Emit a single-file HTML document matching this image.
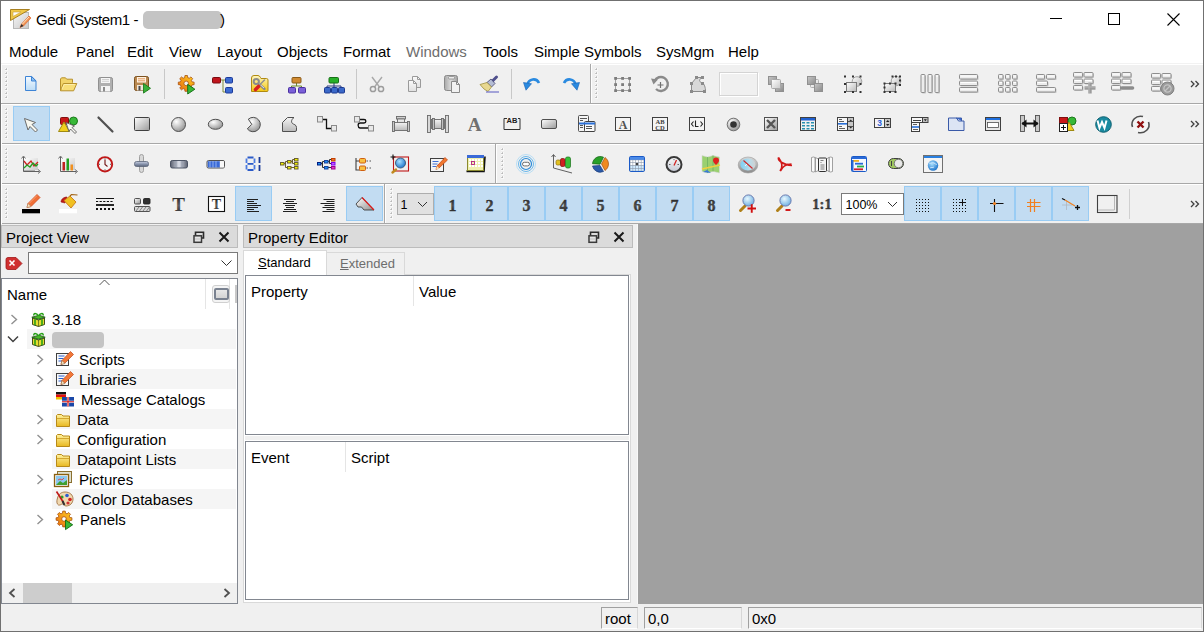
<!DOCTYPE html>
<html><head><meta charset="utf-8">
<style>
*{margin:0;padding:0;box-sizing:border-box}
html,body{width:1204px;height:632px;overflow:hidden;background:#f0f0f0}
body{position:relative;font-family:"Liberation Sans",sans-serif;color:#000}
.a{position:absolute;overflow:visible}
.t{position:absolute;font-size:15px;line-height:17px;white-space:nowrap}
.s{position:absolute;font-size:13px;line-height:15px;white-space:nowrap}
.sel{position:absolute;background:#c2dcf2;border:1px solid #99ccf4}
</style></head><body>

<div class="a" style="left:0;top:0;width:1204px;height:632px;border:1px solid #707070"></div>
<div class="a" style="left:1px;top:1px;width:1202px;height:62px;background:#fff"></div>
<div class="a" style="left:1px;top:63px;width:1202px;height:1px;background:#f2f2f2"></div>
<div class="a" style="left:1px;top:64px;width:1202px;height:1px;background:#fff"></div>
<div class="a" style="left:1px;top:64px;width:1px;height:160px;background:#fff"></div>
<svg class="a" style="left:9px;top:8px" width="22" height="22" viewBox="0 0 22 22">
<defs><linearGradient id="ap" x1="0" y1="0" x2="1" y2="1"><stop offset="0" stop-color="#f8f8f8"/><stop offset="1" stop-color="#c8c8c8"/></linearGradient></defs>
<rect x="4.5" y="4.5" width="15" height="16" fill="url(#ap)" stroke="#b8b8b8"/>
<path d="M1.5 1.5h19l-19 11z" fill="#f0c848" stroke="#a88020"/><path d="M4 4h8l-8 4.5z" fill="#fff" stroke="#c8a040" stroke-width="0.6"/>
<path d="M11 19.5l1.5-3.5 7.5-8 2 2-7.5 8z" fill="#f09050" stroke="#e06830" stroke-width="0.7"/><path d="M13 16.5l7-7.5" stroke="#fff0d0" stroke-width="0.9"/><path d="M11 19.5l1.5-3.5 2 2z" fill="#303030"/>
</svg>
<div class="t" style="left:36px;top:11px;letter-spacing:-0.42px">Gedi (System1 - </div>
<div class="a" style="left:143px;top:11px;width:79px;height:18px;border-radius:5px;background:#c4c4c4"></div>
<div class="t" style="left:220px;top:11px">)</div>
<div class="a" style="left:1050px;top:18px;width:12px;height:1px;background:#000"></div>
<div class="a" style="left:1108px;top:13px;width:12px;height:12px;border:1px solid #000"></div>
<svg class="a" style="left:1167px;top:13px" width="13" height="13" viewBox="0 0 13 13"><path d="M0.5 0.5L12.5 12.5M12.5 0.5L0.5 12.5" stroke="#000" stroke-width="1.1"/></svg>
<div class="t" style="left:9px;top:43px;">Module</div>
<div class="t" style="left:76px;top:43px;">Panel</div>
<div class="t" style="left:127px;top:43px;">Edit</div>
<div class="t" style="left:169px;top:43px;">View</div>
<div class="t" style="left:217px;top:43px;">Layout</div>
<div class="t" style="left:277px;top:43px;">Objects</div>
<div class="t" style="left:343px;top:43px;">Format</div>
<div class="t" style="left:406px;top:43px;color:#6d6d6d">Windows</div>
<div class="t" style="left:483px;top:43px;">Tools</div>
<div class="t" style="left:534px;top:43px;">Simple Symbols</div>
<div class="t" style="left:656px;top:43px;">SysMgm</div>
<div class="t" style="left:728px;top:43px;">Help</div>
<div class="a" style="left:1px;top:103px;width:1202px;height:1px;background:#a8a8a8"></div>
<div class="a" style="left:1px;top:104px;width:1202px;height:1px;background:#fff"></div>
<div class="a" style="left:1px;top:143px;width:1202px;height:1px;background:#a8a8a8"></div>
<div class="a" style="left:1px;top:144px;width:1202px;height:1px;background:#fff"></div>
<div class="a" style="left:1px;top:183px;width:1202px;height:1px;background:#a8a8a8"></div>
<div class="a" style="left:1px;top:184px;width:1202px;height:1px;background:#fff"></div>
<div class="a" style="left:1px;top:223px;width:1202px;height:1px;background:#a8a8a8"></div>
<div class="a" style="left:1px;top:104px;width:1px;height:120px;background:#fff"></div>
<svg class="a" style="left:5px;top:68px" width="3" height="3" viewBox="0 0 3 3"><path d="M0 0h3v3h-3z" fill="#fff" opacity="0.6"/><path d="M2 0v2h-2z" fill="#9c9c9c"/><rect x="1" y="1" width="1" height="1" fill="#b8b8b8"/></svg><svg class="a" style="left:5px;top:72px" width="3" height="3" viewBox="0 0 3 3"><path d="M0 0h3v3h-3z" fill="#fff" opacity="0.6"/><path d="M2 0v2h-2z" fill="#9c9c9c"/><rect x="1" y="1" width="1" height="1" fill="#b8b8b8"/></svg><svg class="a" style="left:5px;top:76px" width="3" height="3" viewBox="0 0 3 3"><path d="M0 0h3v3h-3z" fill="#fff" opacity="0.6"/><path d="M2 0v2h-2z" fill="#9c9c9c"/><rect x="1" y="1" width="1" height="1" fill="#b8b8b8"/></svg><svg class="a" style="left:5px;top:80px" width="3" height="3" viewBox="0 0 3 3"><path d="M0 0h3v3h-3z" fill="#fff" opacity="0.6"/><path d="M2 0v2h-2z" fill="#9c9c9c"/><rect x="1" y="1" width="1" height="1" fill="#b8b8b8"/></svg><svg class="a" style="left:5px;top:84px" width="3" height="3" viewBox="0 0 3 3"><path d="M0 0h3v3h-3z" fill="#fff" opacity="0.6"/><path d="M2 0v2h-2z" fill="#9c9c9c"/><rect x="1" y="1" width="1" height="1" fill="#b8b8b8"/></svg><svg class="a" style="left:5px;top:88px" width="3" height="3" viewBox="0 0 3 3"><path d="M0 0h3v3h-3z" fill="#fff" opacity="0.6"/><path d="M2 0v2h-2z" fill="#9c9c9c"/><rect x="1" y="1" width="1" height="1" fill="#b8b8b8"/></svg><svg class="a" style="left:5px;top:92px" width="3" height="3" viewBox="0 0 3 3"><path d="M0 0h3v3h-3z" fill="#fff" opacity="0.6"/><path d="M2 0v2h-2z" fill="#9c9c9c"/><rect x="1" y="1" width="1" height="1" fill="#b8b8b8"/></svg><svg class="a" style="left:5px;top:96px" width="3" height="3" viewBox="0 0 3 3"><path d="M0 0h3v3h-3z" fill="#fff" opacity="0.6"/><path d="M2 0v2h-2z" fill="#9c9c9c"/><rect x="1" y="1" width="1" height="1" fill="#b8b8b8"/></svg>
<div class="a" style="left:164px;top:69px;width:1px;height:30px;background:#c8c8c8"></div>
<div class="a" style="left:356px;top:69px;width:1px;height:30px;background:#c8c8c8"></div>
<div class="a" style="left:511px;top:69px;width:1px;height:30px;background:#c8c8c8"></div>
<div class="a" style="left:590px;top:64px;width:1px;height:39px;background:#a8a8a8"></div>
<div class="a" style="left:591px;top:64px;width:1px;height:39px;background:#fff"></div>
<svg class="a" style="left:595px;top:68px" width="3" height="3" viewBox="0 0 3 3"><path d="M0 0h3v3h-3z" fill="#fff" opacity="0.6"/><path d="M2 0v2h-2z" fill="#9c9c9c"/><rect x="1" y="1" width="1" height="1" fill="#b8b8b8"/></svg><svg class="a" style="left:595px;top:72px" width="3" height="3" viewBox="0 0 3 3"><path d="M0 0h3v3h-3z" fill="#fff" opacity="0.6"/><path d="M2 0v2h-2z" fill="#9c9c9c"/><rect x="1" y="1" width="1" height="1" fill="#b8b8b8"/></svg><svg class="a" style="left:595px;top:76px" width="3" height="3" viewBox="0 0 3 3"><path d="M0 0h3v3h-3z" fill="#fff" opacity="0.6"/><path d="M2 0v2h-2z" fill="#9c9c9c"/><rect x="1" y="1" width="1" height="1" fill="#b8b8b8"/></svg><svg class="a" style="left:595px;top:80px" width="3" height="3" viewBox="0 0 3 3"><path d="M0 0h3v3h-3z" fill="#fff" opacity="0.6"/><path d="M2 0v2h-2z" fill="#9c9c9c"/><rect x="1" y="1" width="1" height="1" fill="#b8b8b8"/></svg><svg class="a" style="left:595px;top:84px" width="3" height="3" viewBox="0 0 3 3"><path d="M0 0h3v3h-3z" fill="#fff" opacity="0.6"/><path d="M2 0v2h-2z" fill="#9c9c9c"/><rect x="1" y="1" width="1" height="1" fill="#b8b8b8"/></svg><svg class="a" style="left:595px;top:88px" width="3" height="3" viewBox="0 0 3 3"><path d="M0 0h3v3h-3z" fill="#fff" opacity="0.6"/><path d="M2 0v2h-2z" fill="#9c9c9c"/><rect x="1" y="1" width="1" height="1" fill="#b8b8b8"/></svg><svg class="a" style="left:595px;top:92px" width="3" height="3" viewBox="0 0 3 3"><path d="M0 0h3v3h-3z" fill="#fff" opacity="0.6"/><path d="M2 0v2h-2z" fill="#9c9c9c"/><rect x="1" y="1" width="1" height="1" fill="#b8b8b8"/></svg><svg class="a" style="left:595px;top:96px" width="3" height="3" viewBox="0 0 3 3"><path d="M0 0h3v3h-3z" fill="#fff" opacity="0.6"/><path d="M2 0v2h-2z" fill="#9c9c9c"/><rect x="1" y="1" width="1" height="1" fill="#b8b8b8"/></svg>
<div class="a" style="left:719px;top:72px;width:39px;height:24px;border:1px solid #d4d4d4;box-shadow:inset 1px 1px 0 #fff, 1px 1px 0 #fff"></div>
<svg class="a" style="left:1190px;top:80px" width="10" height="8" viewBox="0 0 10 8"><path d="M1 1l3 3-3 3M5.5 1l3 3-3 3" fill="none" stroke="#404040" stroke-width="1.3"/></svg>
<svg class="a" style="left:5px;top:108px" width="3" height="3" viewBox="0 0 3 3"><path d="M0 0h3v3h-3z" fill="#fff" opacity="0.6"/><path d="M2 0v2h-2z" fill="#9c9c9c"/><rect x="1" y="1" width="1" height="1" fill="#b8b8b8"/></svg><svg class="a" style="left:5px;top:112px" width="3" height="3" viewBox="0 0 3 3"><path d="M0 0h3v3h-3z" fill="#fff" opacity="0.6"/><path d="M2 0v2h-2z" fill="#9c9c9c"/><rect x="1" y="1" width="1" height="1" fill="#b8b8b8"/></svg><svg class="a" style="left:5px;top:116px" width="3" height="3" viewBox="0 0 3 3"><path d="M0 0h3v3h-3z" fill="#fff" opacity="0.6"/><path d="M2 0v2h-2z" fill="#9c9c9c"/><rect x="1" y="1" width="1" height="1" fill="#b8b8b8"/></svg><svg class="a" style="left:5px;top:120px" width="3" height="3" viewBox="0 0 3 3"><path d="M0 0h3v3h-3z" fill="#fff" opacity="0.6"/><path d="M2 0v2h-2z" fill="#9c9c9c"/><rect x="1" y="1" width="1" height="1" fill="#b8b8b8"/></svg><svg class="a" style="left:5px;top:124px" width="3" height="3" viewBox="0 0 3 3"><path d="M0 0h3v3h-3z" fill="#fff" opacity="0.6"/><path d="M2 0v2h-2z" fill="#9c9c9c"/><rect x="1" y="1" width="1" height="1" fill="#b8b8b8"/></svg><svg class="a" style="left:5px;top:128px" width="3" height="3" viewBox="0 0 3 3"><path d="M0 0h3v3h-3z" fill="#fff" opacity="0.6"/><path d="M2 0v2h-2z" fill="#9c9c9c"/><rect x="1" y="1" width="1" height="1" fill="#b8b8b8"/></svg><svg class="a" style="left:5px;top:132px" width="3" height="3" viewBox="0 0 3 3"><path d="M0 0h3v3h-3z" fill="#fff" opacity="0.6"/><path d="M2 0v2h-2z" fill="#9c9c9c"/><rect x="1" y="1" width="1" height="1" fill="#b8b8b8"/></svg><svg class="a" style="left:5px;top:136px" width="3" height="3" viewBox="0 0 3 3"><path d="M0 0h3v3h-3z" fill="#fff" opacity="0.6"/><path d="M2 0v2h-2z" fill="#9c9c9c"/><rect x="1" y="1" width="1" height="1" fill="#b8b8b8"/></svg>
<div class="sel" style="left:13px;top:106px;width:37px;height:35px"></div>
<svg class="a" style="left:1190px;top:120px" width="10" height="8" viewBox="0 0 10 8"><path d="M1 1l3 3-3 3M5.5 1l3 3-3 3" fill="none" stroke="#404040" stroke-width="1.3"/></svg>
<svg class="a" style="left:5px;top:148px" width="3" height="3" viewBox="0 0 3 3"><path d="M0 0h3v3h-3z" fill="#fff" opacity="0.6"/><path d="M2 0v2h-2z" fill="#9c9c9c"/><rect x="1" y="1" width="1" height="1" fill="#b8b8b8"/></svg><svg class="a" style="left:5px;top:152px" width="3" height="3" viewBox="0 0 3 3"><path d="M0 0h3v3h-3z" fill="#fff" opacity="0.6"/><path d="M2 0v2h-2z" fill="#9c9c9c"/><rect x="1" y="1" width="1" height="1" fill="#b8b8b8"/></svg><svg class="a" style="left:5px;top:156px" width="3" height="3" viewBox="0 0 3 3"><path d="M0 0h3v3h-3z" fill="#fff" opacity="0.6"/><path d="M2 0v2h-2z" fill="#9c9c9c"/><rect x="1" y="1" width="1" height="1" fill="#b8b8b8"/></svg><svg class="a" style="left:5px;top:160px" width="3" height="3" viewBox="0 0 3 3"><path d="M0 0h3v3h-3z" fill="#fff" opacity="0.6"/><path d="M2 0v2h-2z" fill="#9c9c9c"/><rect x="1" y="1" width="1" height="1" fill="#b8b8b8"/></svg><svg class="a" style="left:5px;top:164px" width="3" height="3" viewBox="0 0 3 3"><path d="M0 0h3v3h-3z" fill="#fff" opacity="0.6"/><path d="M2 0v2h-2z" fill="#9c9c9c"/><rect x="1" y="1" width="1" height="1" fill="#b8b8b8"/></svg><svg class="a" style="left:5px;top:168px" width="3" height="3" viewBox="0 0 3 3"><path d="M0 0h3v3h-3z" fill="#fff" opacity="0.6"/><path d="M2 0v2h-2z" fill="#9c9c9c"/><rect x="1" y="1" width="1" height="1" fill="#b8b8b8"/></svg><svg class="a" style="left:5px;top:172px" width="3" height="3" viewBox="0 0 3 3"><path d="M0 0h3v3h-3z" fill="#fff" opacity="0.6"/><path d="M2 0v2h-2z" fill="#9c9c9c"/><rect x="1" y="1" width="1" height="1" fill="#b8b8b8"/></svg><svg class="a" style="left:5px;top:176px" width="3" height="3" viewBox="0 0 3 3"><path d="M0 0h3v3h-3z" fill="#fff" opacity="0.6"/><path d="M2 0v2h-2z" fill="#9c9c9c"/><rect x="1" y="1" width="1" height="1" fill="#b8b8b8"/></svg>
<div class="a" style="left:495px;top:144px;width:1px;height:39px;background:#a8a8a8"></div>
<div class="a" style="left:496px;top:144px;width:1px;height:39px;background:#fff"></div>
<svg class="a" style="left:501px;top:148px" width="3" height="3" viewBox="0 0 3 3"><path d="M0 0h3v3h-3z" fill="#fff" opacity="0.6"/><path d="M2 0v2h-2z" fill="#9c9c9c"/><rect x="1" y="1" width="1" height="1" fill="#b8b8b8"/></svg><svg class="a" style="left:501px;top:152px" width="3" height="3" viewBox="0 0 3 3"><path d="M0 0h3v3h-3z" fill="#fff" opacity="0.6"/><path d="M2 0v2h-2z" fill="#9c9c9c"/><rect x="1" y="1" width="1" height="1" fill="#b8b8b8"/></svg><svg class="a" style="left:501px;top:156px" width="3" height="3" viewBox="0 0 3 3"><path d="M0 0h3v3h-3z" fill="#fff" opacity="0.6"/><path d="M2 0v2h-2z" fill="#9c9c9c"/><rect x="1" y="1" width="1" height="1" fill="#b8b8b8"/></svg><svg class="a" style="left:501px;top:160px" width="3" height="3" viewBox="0 0 3 3"><path d="M0 0h3v3h-3z" fill="#fff" opacity="0.6"/><path d="M2 0v2h-2z" fill="#9c9c9c"/><rect x="1" y="1" width="1" height="1" fill="#b8b8b8"/></svg><svg class="a" style="left:501px;top:164px" width="3" height="3" viewBox="0 0 3 3"><path d="M0 0h3v3h-3z" fill="#fff" opacity="0.6"/><path d="M2 0v2h-2z" fill="#9c9c9c"/><rect x="1" y="1" width="1" height="1" fill="#b8b8b8"/></svg><svg class="a" style="left:501px;top:168px" width="3" height="3" viewBox="0 0 3 3"><path d="M0 0h3v3h-3z" fill="#fff" opacity="0.6"/><path d="M2 0v2h-2z" fill="#9c9c9c"/><rect x="1" y="1" width="1" height="1" fill="#b8b8b8"/></svg><svg class="a" style="left:501px;top:172px" width="3" height="3" viewBox="0 0 3 3"><path d="M0 0h3v3h-3z" fill="#fff" opacity="0.6"/><path d="M2 0v2h-2z" fill="#9c9c9c"/><rect x="1" y="1" width="1" height="1" fill="#b8b8b8"/></svg><svg class="a" style="left:501px;top:176px" width="3" height="3" viewBox="0 0 3 3"><path d="M0 0h3v3h-3z" fill="#fff" opacity="0.6"/><path d="M2 0v2h-2z" fill="#9c9c9c"/><rect x="1" y="1" width="1" height="1" fill="#b8b8b8"/></svg>
<svg class="a" style="left:5px;top:188px" width="3" height="3" viewBox="0 0 3 3"><path d="M0 0h3v3h-3z" fill="#fff" opacity="0.6"/><path d="M2 0v2h-2z" fill="#9c9c9c"/><rect x="1" y="1" width="1" height="1" fill="#b8b8b8"/></svg><svg class="a" style="left:5px;top:192px" width="3" height="3" viewBox="0 0 3 3"><path d="M0 0h3v3h-3z" fill="#fff" opacity="0.6"/><path d="M2 0v2h-2z" fill="#9c9c9c"/><rect x="1" y="1" width="1" height="1" fill="#b8b8b8"/></svg><svg class="a" style="left:5px;top:196px" width="3" height="3" viewBox="0 0 3 3"><path d="M0 0h3v3h-3z" fill="#fff" opacity="0.6"/><path d="M2 0v2h-2z" fill="#9c9c9c"/><rect x="1" y="1" width="1" height="1" fill="#b8b8b8"/></svg><svg class="a" style="left:5px;top:200px" width="3" height="3" viewBox="0 0 3 3"><path d="M0 0h3v3h-3z" fill="#fff" opacity="0.6"/><path d="M2 0v2h-2z" fill="#9c9c9c"/><rect x="1" y="1" width="1" height="1" fill="#b8b8b8"/></svg><svg class="a" style="left:5px;top:204px" width="3" height="3" viewBox="0 0 3 3"><path d="M0 0h3v3h-3z" fill="#fff" opacity="0.6"/><path d="M2 0v2h-2z" fill="#9c9c9c"/><rect x="1" y="1" width="1" height="1" fill="#b8b8b8"/></svg><svg class="a" style="left:5px;top:208px" width="3" height="3" viewBox="0 0 3 3"><path d="M0 0h3v3h-3z" fill="#fff" opacity="0.6"/><path d="M2 0v2h-2z" fill="#9c9c9c"/><rect x="1" y="1" width="1" height="1" fill="#b8b8b8"/></svg><svg class="a" style="left:5px;top:212px" width="3" height="3" viewBox="0 0 3 3"><path d="M0 0h3v3h-3z" fill="#fff" opacity="0.6"/><path d="M2 0v2h-2z" fill="#9c9c9c"/><rect x="1" y="1" width="1" height="1" fill="#b8b8b8"/></svg><svg class="a" style="left:5px;top:216px" width="3" height="3" viewBox="0 0 3 3"><path d="M0 0h3v3h-3z" fill="#fff" opacity="0.6"/><path d="M2 0v2h-2z" fill="#9c9c9c"/><rect x="1" y="1" width="1" height="1" fill="#b8b8b8"/></svg>
<div class="sel" style="left:235px;top:186px;width:37px;height:35px"></div>
<div class="sel" style="left:346px;top:186px;width:37px;height:35px"></div>
<div class="a" style="left:384px;top:184px;width:1px;height:39px;background:#a8a8a8"></div>
<div class="a" style="left:385px;top:184px;width:1px;height:39px;background:#fff"></div>
<svg class="a" style="left:390px;top:188px" width="3" height="3" viewBox="0 0 3 3"><path d="M0 0h3v3h-3z" fill="#fff" opacity="0.6"/><path d="M2 0v2h-2z" fill="#9c9c9c"/><rect x="1" y="1" width="1" height="1" fill="#b8b8b8"/></svg><svg class="a" style="left:390px;top:192px" width="3" height="3" viewBox="0 0 3 3"><path d="M0 0h3v3h-3z" fill="#fff" opacity="0.6"/><path d="M2 0v2h-2z" fill="#9c9c9c"/><rect x="1" y="1" width="1" height="1" fill="#b8b8b8"/></svg><svg class="a" style="left:390px;top:196px" width="3" height="3" viewBox="0 0 3 3"><path d="M0 0h3v3h-3z" fill="#fff" opacity="0.6"/><path d="M2 0v2h-2z" fill="#9c9c9c"/><rect x="1" y="1" width="1" height="1" fill="#b8b8b8"/></svg><svg class="a" style="left:390px;top:200px" width="3" height="3" viewBox="0 0 3 3"><path d="M0 0h3v3h-3z" fill="#fff" opacity="0.6"/><path d="M2 0v2h-2z" fill="#9c9c9c"/><rect x="1" y="1" width="1" height="1" fill="#b8b8b8"/></svg><svg class="a" style="left:390px;top:204px" width="3" height="3" viewBox="0 0 3 3"><path d="M0 0h3v3h-3z" fill="#fff" opacity="0.6"/><path d="M2 0v2h-2z" fill="#9c9c9c"/><rect x="1" y="1" width="1" height="1" fill="#b8b8b8"/></svg><svg class="a" style="left:390px;top:208px" width="3" height="3" viewBox="0 0 3 3"><path d="M0 0h3v3h-3z" fill="#fff" opacity="0.6"/><path d="M2 0v2h-2z" fill="#9c9c9c"/><rect x="1" y="1" width="1" height="1" fill="#b8b8b8"/></svg><svg class="a" style="left:390px;top:212px" width="3" height="3" viewBox="0 0 3 3"><path d="M0 0h3v3h-3z" fill="#fff" opacity="0.6"/><path d="M2 0v2h-2z" fill="#9c9c9c"/><rect x="1" y="1" width="1" height="1" fill="#b8b8b8"/></svg><svg class="a" style="left:390px;top:216px" width="3" height="3" viewBox="0 0 3 3"><path d="M0 0h3v3h-3z" fill="#fff" opacity="0.6"/><path d="M2 0v2h-2z" fill="#9c9c9c"/><rect x="1" y="1" width="1" height="1" fill="#b8b8b8"/></svg>
<div class="sel" style="left:434px;top:186px;width:37px;height:35px"></div>
<div class="sel" style="left:471px;top:186px;width:37px;height:35px"></div>
<div class="sel" style="left:508px;top:186px;width:37px;height:35px"></div>
<div class="sel" style="left:545px;top:186px;width:37px;height:35px"></div>
<div class="sel" style="left:582px;top:186px;width:37px;height:35px"></div>
<div class="sel" style="left:619px;top:186px;width:37px;height:35px"></div>
<div class="sel" style="left:656px;top:186px;width:37px;height:35px"></div>
<div class="sel" style="left:693px;top:186px;width:37px;height:35px"></div>
<div class="sel" style="left:904px;top:186px;width:37px;height:35px"></div>
<div class="sel" style="left:941px;top:186px;width:37px;height:35px"></div>
<div class="sel" style="left:978px;top:186px;width:37px;height:35px"></div>
<div class="sel" style="left:1015px;top:186px;width:37px;height:35px"></div>
<div class="sel" style="left:1052px;top:186px;width:37px;height:35px"></div>
<div class="a" style="left:1129px;top:189px;width:1px;height:30px;background:#d0d0d0"></div>
<svg class="a" style="left:1190px;top:200px" width="10" height="8" viewBox="0 0 10 8"><path d="M1 1l3 3-3 3M5.5 1l3 3-3 3" fill="none" stroke="#404040" stroke-width="1.3"/></svg>
<svg class="a" style="left:21px;top:74px" width="20" height="20" viewBox="0 0 20 20"><defs><linearGradient id="gdoc" x1="0" y1="0" x2="0" y2="1"><stop offset="0" stop-color="#f4faff"/><stop offset="1" stop-color="#bcdcf6"/></linearGradient></defs>
<path d="M4.5 2.5h6.2l4.3 4.3v9.7h-10.5z" fill="url(#gdoc)" stroke="#3d84d6" stroke-linejoin="round"/>
<path d="M10.5 2.5v4.5h4.5z" fill="#8fc0ee" stroke="#3d84d6" stroke-linejoin="round"/></svg>
<svg class="a" style="left:58px;top:74px" width="20" height="20" viewBox="0 0 20 20"><path d="M2.5 16.5v-11.5l1-1.2h4l1.2 1.4h5.8v3.5" fill="#f2d46a" stroke="#b8922c"/>
<path d="M2.5 16.8l2.8-7.3h13.5l-3.2 7.3z" fill="#f8de78" stroke="#b8922c" stroke-linejoin="round"/>
<path d="M4 15l2.2-4.5h10.5" fill="none" stroke="#fff3b8" stroke-width="0.8"/></svg>
<svg class="a" style="left:95px;top:74px" width="20" height="20" viewBox="0 0 20 20"><rect x="3.5" y="3.5" width="14" height="14" rx="1.8" fill="#b0b0b0" stroke="#909090"/>
<rect x="6" y="4" width="9" height="5" fill="#f6f6f6"/><path d="M7 5.5h7M7 7.3h7" stroke="#c8c8c8" stroke-width="0.8"/>
<rect x="6" y="12" width="9" height="5.5" fill="#f4f4f4"/><rect x="8" y="13" width="2" height="4.5" fill="#8c8c8c"/></svg>
<svg class="a" style="left:132px;top:74px" width="20" height="20" viewBox="0 0 20 20"><rect x="2.5" y="2.5" width="14" height="14" rx="1.8" fill="#b98850" stroke="#7c5220"/>
<rect x="5" y="3" width="9" height="5.5" fill="#fff2e0"/><path d="M6 4.8h7M6 6.8h7" stroke="#e09050" stroke-width="0.9"/>
<rect x="5" y="11" width="9" height="5.5" fill="#f0e6d8"/><rect x="6.5" y="12" width="2" height="4.5" fill="#4a4a4a"/>
<path d="M11.5 9.5l7 4.8-7 4.8z" fill="#38b038" stroke="#1d7d1d" stroke-width="0.9" stroke-linejoin="round"/></svg>
<svg class="a" style="left:176px;top:74px" width="20" height="21" viewBox="0 0 20 21"><defs><linearGradient id="gr1" x1="0" y1="1" x2="1" y2="0"><stop offset="0" stop-color="#e86a10"/><stop offset="1" stop-color="#ffd020"/></linearGradient></defs><path d="M16.01 7.91 L18.10 8.15 L18.10 10.65 L16.01 10.89 L15.36 12.45 L16.67 14.10 L14.90 15.87 L13.25 14.56 L11.69 15.21 L11.45 17.30 L8.95 17.30 L8.71 15.21 L7.15 14.56 L5.50 15.87 L3.73 14.10 L5.04 12.45 L4.39 10.89 L2.30 10.65 L2.30 8.15 L4.39 7.91 L5.04 6.35 L3.73 4.70 L5.50 2.93 L7.15 4.24 L8.71 3.59 L8.95 1.50 L11.45 1.50 L11.69 3.59 L13.25 4.24 L14.90 2.93 L16.67 4.70 L15.36 6.35Z M12.50 9.40 A2.3 2.3 0 1 0 7.90 9.40 A2.3 2.3 0 1 0 12.50 9.40Z" fill="url(#gr1)" fill-rule="evenodd" stroke="#a85010" stroke-width="0.8" stroke-linejoin="round"/><path d="M11.7 10.4l7.2 4.8-7.2 4.8z" fill="#38b838" stroke="#106a10" stroke-width="0.9" stroke-linejoin="round"/></svg>
<svg class="a" style="left:212px;top:74px" width="22" height="20" viewBox="0 0 22 20"><path d="M8 6h3v12h3M11 6h3" fill="none" stroke="#7c8a3a" stroke-width="1"/>
<rect x="0.5" y="3.5" width="8" height="5.5" rx="1" fill="#c0141c" stroke="#7a0a10"/>
<rect x="13.5" y="3.5" width="7" height="5.5" rx="1" fill="#3c6ad0" stroke="#1c3a9a"/>
<rect x="13.5" y="13.5" width="7" height="5.5" rx="1" fill="#3c6ad0" stroke="#1c3a9a"/></svg>
<svg class="a" style="left:249px;top:74px" width="21" height="20" viewBox="0 0 21 20"><defs><linearGradient id="wf" x1="0" y1="0" x2="0" y2="1"><stop offset="0" stop-color="#fff6c0"/><stop offset="1" stop-color="#f4c810"/></linearGradient></defs>
<path d="M2.5 17.5V4Q2.5 1.5 5 1.5H9Q10.5 1.5 11.5 3.5L12 4.5H17.5Q19 4.5 19 6V16.5Q19 17.5 18 17.5Z" fill="url(#wf)" stroke="#b08a10" stroke-width="1"/>
<path d="M9.5 9.5L15.5 15" stroke="#8a8a8a" stroke-width="2.4" stroke-linecap="round"/><path d="M10 9.5L15 14" stroke="#f0f0f0" stroke-width="0.8"/>
<circle cx="7.3" cy="7.5" r="2.6" fill="none" stroke="#8c8c8c" stroke-width="2"/>
<path d="M10.5 11L15.5 6" stroke="#909090" stroke-width="1.5" stroke-linecap="round"/>
<path d="M6.5 15.5L9.5 12.5" stroke="#d82020" stroke-width="3.6" stroke-linecap="round"/></svg>
<svg class="a" style="left:287px;top:74px" width="20" height="20" viewBox="0 0 20 20"><path d="M9.5 9v3M4.5 15v-3h10v3" fill="none" stroke="#6c8a2c"/>
<rect x="5" y="3.5" width="9" height="5.5" rx="1" fill="#d08a30" stroke="#8a5a18"/>
<rect x="1.5" y="13.5" width="7" height="5.5" rx="1" fill="#7a60d8" stroke="#4a30a0"/>
<rect x="11.5" y="13.5" width="7" height="5.5" rx="1" fill="#7a60d8" stroke="#4a30a0"/></svg>
<svg class="a" style="left:324px;top:74px" width="21" height="20" viewBox="0 0 21 20"><path d="M10 9v6M3 15v-3h14v3" fill="none" stroke="#2a3a80"/>
<rect x="5" y="3.5" width="9.5" height="5.5" rx="1" fill="#28b028" stroke="#167016"/>
<rect x="0.5" y="13.5" width="6" height="5.5" rx="1" fill="#3a68c8" stroke="#1c3a90"/>
<rect x="7.5" y="13.5" width="6" height="5.5" rx="1" fill="#3a68c8" stroke="#1c3a90"/>
<rect x="14.5" y="13.5" width="6" height="5.5" rx="1" fill="#3a68c8" stroke="#1c3a90"/></svg>
<svg class="a" style="left:368px;top:74px" width="20" height="20" viewBox="0 0 20 20"><path d="M4 3l7.5 10M14 3l-7.5 10" stroke="#a8a8a8" stroke-width="1.4"/>
<circle cx="5" cy="15" r="2.6" fill="none" stroke="#9c9c9c" stroke-width="1.5"/><circle cx="13" cy="15" r="2.6" fill="none" stroke="#9c9c9c" stroke-width="1.5"/></svg>
<svg class="a" style="left:405px;top:74px" width="20" height="20" viewBox="0 0 20 20"><defs><linearGradient id="pg" x1="0" y1="0" x2="0" y2="1"><stop offset="0" stop-color="#fafafa"/><stop offset="1" stop-color="#e0e0e0"/></linearGradient></defs>
<path d="M7.5 2.5h5l3 3v8h-8z" fill="url(#pg)" stroke="#9a9a9a" stroke-linejoin="round"/><path d="M12.5 2.5v3h3" fill="none" stroke="#9a9a9a"/>
<path d="M3.5 6.5h5l3 3v8h-8z" fill="url(#pg)" stroke="#9a9a9a" stroke-linejoin="round"/><path d="M8.5 6.5v3h3" fill="none" stroke="#9a9a9a"/></svg>
<svg class="a" style="left:442px;top:74px" width="20" height="20" viewBox="0 0 20 20"><defs><linearGradient id="cb" x1="0" y1="0" x2="1" y2="0"><stop offset="0" stop-color="#a8a8a8"/><stop offset="0.5" stop-color="#dcdcdc"/><stop offset="1" stop-color="#a0a0a0"/></linearGradient></defs>
<rect x="2.5" y="1.5" width="13" height="15" rx="2" fill="url(#cb)" stroke="#8a8a8a"/><rect x="6.5" y="2.5" width="6" height="2.5" rx="1" fill="#ececec" stroke="#8a8a8a" stroke-width="0.8"/>
<path d="M9.5 7.5h5l3 3v8h-8z" fill="#f2f2f2" stroke="#8a8a8a" stroke-linejoin="round"/><path d="M14.5 7.5v3h3" fill="none" stroke="#8a8a8a"/></svg>
<svg class="a" style="left:479px;top:74px" width="21" height="20" viewBox="0 0 21 20"><path d="M17.5 3L12 8.5" stroke="#50508c" stroke-width="3" stroke-linecap="round"/>
<path d="M8 8.5L12 5L16 9.5L12.5 13z" fill="#b4bcd4" stroke="#404070" stroke-width="0.8"/>
<path d="M8 8.5L12.5 13L9 17.5Q5 16 1 10.5z" fill="#e8d890" stroke="#a09040" stroke-width="0.8"/>
<path d="M7 18h13" stroke="#7070c8" stroke-width="1.2"/></svg>
<svg class="a" style="left:522px;top:74px" width="20" height="20" viewBox="0 0 20 20"><path d="M5.5 10.5c1-6 9-7 11.5-1.5" fill="none" stroke="#2a8ae0" stroke-width="2.6"/>
<path d="M1.5 8.5l8 1.2-5.5 6.5z" fill="#2a8ae0" stroke="#1a60b0" stroke-width="0.6" stroke-linejoin="round"/></svg>
<svg class="a" style="left:561px;top:74px" width="20" height="20" viewBox="0 0 20 20"><path d="M3 9c2.5-5.5 10.5-4.5 11.5 1.5" fill="none" stroke="#2a8ae0" stroke-width="2.6"/>
<path d="M18.5 8.5l-8 1.2 5.5 6.5z" fill="#2a8ae0" stroke="#1a60b0" stroke-width="0.6" stroke-linejoin="round"/></svg>
<svg class="a" style="left:612px;top:74px" width="20" height="20" viewBox="0 0 20 20"><rect x="3.5" y="4.5" width="14" height="12" fill="none" stroke="#a0a0a0"/>
<g fill="#7c7c7c"><rect x="2.2" y="3" width="2.8" height="2.8"/><rect x="9.2" y="3" width="2.8" height="2.8"/><rect x="16.2" y="3" width="2.8" height="2.8"/>
<rect x="2.2" y="9.2" width="2.8" height="2.8"/><rect x="16.2" y="9.2" width="2.8" height="2.8"/><rect x="9.2" y="9.2" width="2.8" height="2.8"/>
<rect x="2.2" y="15.2" width="2.8" height="2.8"/><rect x="9.2" y="15.2" width="2.8" height="2.8"/><rect x="16.2" y="15.2" width="2.8" height="2.8"/></g></svg>
<svg class="a" style="left:650px;top:74px" width="20" height="20" viewBox="0 0 20 20"><path d="M4.5 7a7 7 0 1 1 1.5 8" fill="none" stroke="#8a8a8a" stroke-width="2.4"/>
<path d="M1 4.5l7 1-4.5 5z" fill="#8a8a8a"/><path d="M10.5 8v6M7.5 11h6" stroke="#707070" stroke-width="1.2"/></svg>
<svg class="a" style="left:688px;top:74px" width="20" height="20" viewBox="0 0 20 20"><path d="M3.5 17.5v-8l5-6h5c-2 2-3 4 0 5 3 1 4 5 4 9z" fill="#d8d8d8" stroke="#8a8a8a"/>
<g fill="#8a8a8a"><rect x="2" y="8" width="3" height="3"/><rect x="7" y="2" width="3" height="3"/><rect x="13" y="2" width="3" height="3"/><rect x="2" y="16" width="3" height="3"/><rect x="15" y="16" width="3" height="3"/><rect x="13" y="8" width="3" height="3"/></g></svg>
<svg class="a" style="left:766px;top:74px" width="20" height="20" viewBox="0 0 20 20"><defs><linearGradient id="o1d" x1="0" y1="0" x2="1" y2="1"><stop offset="0" stop-color="#c8c8c8"/><stop offset="1" stop-color="#8a8a8a"/></linearGradient></defs><defs><linearGradient id="o1l" x1="0" y1="0" x2="1" y2="1"><stop offset="0" stop-color="#ffffff"/><stop offset="1" stop-color="#c8c8c8"/></linearGradient></defs>
<rect x="2.5" y="2.5" width="8" height="8" fill="url(#o1d)" stroke="#909090"/>
<rect x="9.5" y="9.5" width="8" height="8" fill="url(#o1d)" stroke="#909090"/>
<rect x="5.5" y="5.5" width="9" height="9" rx="1" fill="url(#o1l)" stroke="#a8a8a8"/></svg>
<svg class="a" style="left:805px;top:74px" width="20" height="20" viewBox="0 0 20 20"><defs><linearGradient id="o2d" x1="0" y1="0" x2="1" y2="1"><stop offset="0" stop-color="#c8c8c8"/><stop offset="1" stop-color="#8a8a8a"/></linearGradient></defs><defs><linearGradient id="o2l" x1="0" y1="0" x2="1" y2="1"><stop offset="0" stop-color="#ffffff"/><stop offset="1" stop-color="#d8d8d8"/></linearGradient></defs>
<rect x="5.5" y="5.5" width="8" height="8" rx="1" fill="url(#o2l)" stroke="#b0b0b0"/>
<rect x="2.5" y="2.5" width="8" height="8" fill="url(#o2d)" stroke="#909090"/>
<rect x="9.5" y="9.5" width="8" height="8" fill="url(#o2d)" stroke="#909090"/></svg>
<svg class="a" style="left:843px;top:74px" width="20" height="20" viewBox="0 0 20 20"><defs><linearGradient id="g1r" x1="0" y1="0" x2="1" y2="1"><stop offset="0" stop-color="#ffffff"/><stop offset="1" stop-color="#b8b8b8"/></linearGradient></defs><circle cx="14" cy="7.5" r="4.8" fill="url(#g1r)" stroke="#a0a0a0"/>
<rect x="3.5" y="8.5" width="10" height="9" fill="url(#g1r)" stroke="#7a7a7a"/>
<g fill="#333"><rect x="1" y="1.5" width="2" height="2"/><rect x="9" y="1.5" width="2" height="2"/><rect x="16.5" y="1.5" width="2" height="2"/><rect x="1" y="9" width="2" height="2"/><rect x="1" y="17" width="2" height="2"/><rect x="9" y="17" width="2" height="2"/><rect x="16.5" y="17" width="2" height="2"/><rect x="16.5" y="9" width="2" height="2"/></g></svg>
<svg class="a" style="left:882px;top:74px" width="20" height="20" viewBox="0 0 20 20"><defs><linearGradient id="g2r" x1="0" y1="0" x2="1" y2="1"><stop offset="0" stop-color="#ffffff"/><stop offset="1" stop-color="#b8b8b8"/></linearGradient></defs><circle cx="14" cy="7" r="4.8" fill="url(#g2r)" stroke="#a0a0a0"/>
<rect x="2.5" y="9.5" width="11" height="8" fill="url(#g2r)" stroke="#7a7a7a"/>
<g fill="#333"><rect x="9.5" y="1.5" width="2" height="2"/><rect x="13" y="1.5" width="2" height="2"/><rect x="17" y="1.5" width="2" height="2"/><rect x="17" y="5.5" width="2" height="2"/><rect x="17" y="10" width="2" height="2"/><rect x="1.5" y="8.5" width="2" height="2"/><rect x="1.5" y="17" width="2" height="2"/><rect x="7" y="17" width="2" height="2"/><rect x="12.5" y="17" width="2" height="2"/><rect x="12.5" y="8.5" width="2" height="2"/><rect x="7" y="8.5" width="2" height="2"/><rect x="1.5" y="12.5" width="2" height="2"/></g></svg>
<svg class="a" style="left:920px;top:74px" width="22" height="21" viewBox="0 0 22 21"><rect x="2.0" y="1.5" width="4" height="18" rx="0.8" fill="#c4c4c4"/><rect x="1.0" y="0.5" width="4" height="18" rx="0.8" fill="#ececec" stroke="#8e8e8e"/><path d="M2.0 2h2" stroke="#fff" stroke-width="1"/><rect x="9.0" y="1.5" width="4" height="18" rx="0.8" fill="#c4c4c4"/><rect x="8.0" y="0.5" width="4" height="18" rx="0.8" fill="#ececec" stroke="#8e8e8e"/><path d="M9.0 2h2" stroke="#fff" stroke-width="1"/><rect x="16.0" y="1.5" width="4" height="18" rx="0.8" fill="#c4c4c4"/><rect x="15.0" y="0.5" width="4" height="18" rx="0.8" fill="#ececec" stroke="#8e8e8e"/><path d="M16.0 2h2" stroke="#fff" stroke-width="1"/></svg>
<svg class="a" style="left:959px;top:74px" width="21" height="21" viewBox="0 0 21 21"><rect x="1.5" y="1.5" width="18" height="4.5" rx="0.8" fill="#c4c4c4"/><rect x="0.5" y="0.5" width="18" height="4.5" rx="0.8" fill="#ececec" stroke="#8e8e8e"/><path d="M1.5 2h16" stroke="#fff" stroke-width="1"/><rect x="1.5" y="8.0" width="18" height="4.5" rx="0.8" fill="#c4c4c4"/><rect x="0.5" y="7.0" width="18" height="4.5" rx="0.8" fill="#ececec" stroke="#8e8e8e"/><path d="M1.5 8.5h16" stroke="#fff" stroke-width="1"/><rect x="1.5" y="14.5" width="18" height="4.5" rx="0.8" fill="#c4c4c4"/><rect x="0.5" y="13.5" width="18" height="4.5" rx="0.8" fill="#ececec" stroke="#8e8e8e"/><path d="M1.5 15h16" stroke="#fff" stroke-width="1"/></svg>
<svg class="a" style="left:998px;top:74px" width="21" height="21" viewBox="0 0 21 21"><rect x="1.5" y="1.5" width="4.5" height="4.5" rx="0.8" fill="#c4c4c4"/><rect x="0.5" y="0.5" width="4.5" height="4.5" rx="0.8" fill="#ececec" stroke="#8e8e8e"/><path d="M1.5 2h2.5" stroke="#fff" stroke-width="1"/><rect x="1.5" y="8.0" width="4.5" height="4.5" rx="0.8" fill="#c4c4c4"/><rect x="0.5" y="7.0" width="4.5" height="4.5" rx="0.8" fill="#ececec" stroke="#8e8e8e"/><path d="M1.5 8.5h2.5" stroke="#fff" stroke-width="1"/><rect x="1.5" y="14.5" width="4.5" height="4.5" rx="0.8" fill="#c4c4c4"/><rect x="0.5" y="13.5" width="4.5" height="4.5" rx="0.8" fill="#ececec" stroke="#8e8e8e"/><path d="M1.5 15h2.5" stroke="#fff" stroke-width="1"/><rect x="8.5" y="1.5" width="4.5" height="4.5" rx="0.8" fill="#c4c4c4"/><rect x="7.5" y="0.5" width="4.5" height="4.5" rx="0.8" fill="#ececec" stroke="#8e8e8e"/><path d="M8.5 2h2.5" stroke="#fff" stroke-width="1"/><rect x="8.5" y="8.0" width="4.5" height="4.5" rx="0.8" fill="#c4c4c4"/><rect x="7.5" y="7.0" width="4.5" height="4.5" rx="0.8" fill="#ececec" stroke="#8e8e8e"/><path d="M8.5 8.5h2.5" stroke="#fff" stroke-width="1"/><rect x="8.5" y="14.5" width="4.5" height="4.5" rx="0.8" fill="#c4c4c4"/><rect x="7.5" y="13.5" width="4.5" height="4.5" rx="0.8" fill="#ececec" stroke="#8e8e8e"/><path d="M8.5 15h2.5" stroke="#fff" stroke-width="1"/><rect x="15.5" y="1.5" width="4.5" height="4.5" rx="0.8" fill="#c4c4c4"/><rect x="14.5" y="0.5" width="4.5" height="4.5" rx="0.8" fill="#ececec" stroke="#8e8e8e"/><path d="M15.5 2h2.5" stroke="#fff" stroke-width="1"/><rect x="15.5" y="8.0" width="4.5" height="4.5" rx="0.8" fill="#c4c4c4"/><rect x="14.5" y="7.0" width="4.5" height="4.5" rx="0.8" fill="#ececec" stroke="#8e8e8e"/><path d="M15.5 8.5h2.5" stroke="#fff" stroke-width="1"/><rect x="15.5" y="14.5" width="4.5" height="4.5" rx="0.8" fill="#c4c4c4"/><rect x="14.5" y="13.5" width="4.5" height="4.5" rx="0.8" fill="#ececec" stroke="#8e8e8e"/><path d="M15.5 15h2.5" stroke="#fff" stroke-width="1"/></svg>
<svg class="a" style="left:1036px;top:74px" width="22" height="21" viewBox="0 0 22 21"><rect x="1.5" y="1.5" width="8" height="4.5" rx="0.8" fill="#c4c4c4"/><rect x="0.5" y="0.5" width="8" height="4.5" rx="0.8" fill="#ececec" stroke="#8e8e8e"/><path d="M1.5 2h6" stroke="#fff" stroke-width="1"/><rect x="11.5" y="1.5" width="9" height="4.5" rx="0.8" fill="#c4c4c4"/><rect x="10.5" y="0.5" width="9" height="4.5" rx="0.8" fill="#ececec" stroke="#8e8e8e"/><path d="M11.5 2h7" stroke="#fff" stroke-width="1"/><rect x="1.5" y="8.0" width="11" height="4.5" rx="0.8" fill="#c4c4c4"/><rect x="0.5" y="7.0" width="11" height="4.5" rx="0.8" fill="#ececec" stroke="#8e8e8e"/><path d="M1.5 8.5h9" stroke="#fff" stroke-width="1"/><rect x="1.5" y="14.5" width="19" height="4.5" rx="0.8" fill="#c4c4c4"/><rect x="0.5" y="13.5" width="19" height="4.5" rx="0.8" fill="#ececec" stroke="#8e8e8e"/><path d="M1.5 15h17" stroke="#fff" stroke-width="1"/></svg>
<svg class="a" style="left:1073px;top:72px" width="24" height="24" viewBox="0 0 24 24"><rect x="1.5" y="1.5" width="9" height="4.5" rx="0.8" fill="#c4c4c4"/><rect x="0.5" y="0.5" width="9" height="4.5" rx="0.8" fill="#ececec" stroke="#8e8e8e"/><path d="M1.5 2h7" stroke="#fff" stroke-width="1"/><rect x="12.0" y="1.5" width="9" height="4.5" rx="0.8" fill="#c4c4c4"/><rect x="11.0" y="0.5" width="9" height="4.5" rx="0.8" fill="#ececec" stroke="#8e8e8e"/><path d="M12.0 2h7" stroke="#fff" stroke-width="1"/><rect x="1.5" y="8.0" width="9" height="4.5" rx="0.8" fill="#c4c4c4"/><rect x="0.5" y="7.0" width="9" height="4.5" rx="0.8" fill="#ececec" stroke="#8e8e8e"/><path d="M1.5 8.5h7" stroke="#fff" stroke-width="1"/><rect x="12.0" y="8.0" width="9" height="4.5" rx="0.8" fill="#c4c4c4"/><rect x="11.0" y="7.0" width="9" height="4.5" rx="0.8" fill="#ececec" stroke="#8e8e8e"/><path d="M12.0 8.5h7" stroke="#fff" stroke-width="1"/><rect x="1.5" y="14.5" width="9" height="4.5" rx="0.8" fill="#c4c4c4"/><rect x="0.5" y="13.5" width="9" height="4.5" rx="0.8" fill="#ececec" stroke="#8e8e8e"/><path d="M1.5 15h7" stroke="#fff" stroke-width="1"/><path d="M17 10.5v11M11.5 16h11" stroke="#9c9c9c" stroke-width="3.4"/><path d="M16 11v10M12 15h10" stroke="#b8b8b8" stroke-width="1"/></svg>
<svg class="a" style="left:1111px;top:72px" width="24" height="22" viewBox="0 0 24 22"><rect x="1.5" y="1.5" width="9" height="4.5" rx="0.8" fill="#c4c4c4"/><rect x="0.5" y="0.5" width="9" height="4.5" rx="0.8" fill="#ececec" stroke="#8e8e8e"/><path d="M1.5 2h7" stroke="#fff" stroke-width="1"/><rect x="12.0" y="1.5" width="9" height="4.5" rx="0.8" fill="#c4c4c4"/><rect x="11.0" y="0.5" width="9" height="4.5" rx="0.8" fill="#ececec" stroke="#8e8e8e"/><path d="M12.0 2h7" stroke="#fff" stroke-width="1"/><rect x="1.5" y="8.0" width="9" height="4.5" rx="0.8" fill="#c4c4c4"/><rect x="0.5" y="7.0" width="9" height="4.5" rx="0.8" fill="#ececec" stroke="#8e8e8e"/><path d="M1.5 8.5h7" stroke="#fff" stroke-width="1"/><rect x="12.0" y="8.0" width="9" height="4.5" rx="0.8" fill="#c4c4c4"/><rect x="11.0" y="7.0" width="9" height="4.5" rx="0.8" fill="#ececec" stroke="#8e8e8e"/><path d="M12.0 8.5h7" stroke="#fff" stroke-width="1"/><rect x="1.5" y="14.5" width="9" height="4.5" rx="0.8" fill="#c4c4c4"/><rect x="0.5" y="13.5" width="9" height="4.5" rx="0.8" fill="#ececec" stroke="#8e8e8e"/><path d="M1.5 15h7" stroke="#fff" stroke-width="1"/><path d="M11 16h10.5" stroke="#8c8c8c" stroke-width="3.6" stroke-linecap="round"/></svg>
<svg class="a" style="left:1151px;top:73px" width="24" height="23" viewBox="0 0 24 23"><rect x="1.5" y="1.5" width="9" height="4.5" rx="0.8" fill="#c4c4c4"/><rect x="0.5" y="0.5" width="9" height="4.5" rx="0.8" fill="#ececec" stroke="#8e8e8e"/><path d="M1.5 2h7" stroke="#fff" stroke-width="1"/><rect x="12.0" y="1.5" width="9" height="4.5" rx="0.8" fill="#c4c4c4"/><rect x="11.0" y="0.5" width="9" height="4.5" rx="0.8" fill="#ececec" stroke="#8e8e8e"/><path d="M12.0 2h7" stroke="#fff" stroke-width="1"/><rect x="1.5" y="8.0" width="9" height="4.5" rx="0.8" fill="#c4c4c4"/><rect x="0.5" y="7.0" width="9" height="4.5" rx="0.8" fill="#ececec" stroke="#8e8e8e"/><path d="M1.5 8.5h7" stroke="#fff" stroke-width="1"/><rect x="12.0" y="8.0" width="9" height="4.5" rx="0.8" fill="#c4c4c4"/><rect x="11.0" y="7.0" width="9" height="4.5" rx="0.8" fill="#ececec" stroke="#8e8e8e"/><path d="M12.0 8.5h7" stroke="#fff" stroke-width="1"/><rect x="1.5" y="14.5" width="9" height="4.5" rx="0.8" fill="#c4c4c4"/><rect x="0.5" y="13.5" width="9" height="4.5" rx="0.8" fill="#ececec" stroke="#8e8e8e"/><path d="M1.5 15h7" stroke="#fff" stroke-width="1"/><circle cx="16.5" cy="15.5" r="6.5" fill="#9a9a9a" stroke="#808080"/><circle cx="16.5" cy="15.5" r="3.6" fill="none" stroke="#c4c4c4" stroke-width="1.3"/><path d="M14 18l5-5" stroke="#c4c4c4" stroke-width="1.3"/></svg>
<svg class="a" style="left:0;top:0" width="1204" height="632" viewBox="0 0 1204 632"><defs>
<linearGradient id="gg" x1="0" y1="0" x2="1" y2="1"><stop offset="0" stop-color="#ffffff"/><stop offset="1" stop-color="#9a9a9a"/></linearGradient>
<radialGradient id="rg" cx="0.35" cy="0.3" r="0.8"><stop offset="0" stop-color="#ffffff"/><stop offset="1" stop-color="#8c8c8c"/></radialGradient>
<linearGradient id="gv" x1="0" y1="0" x2="0" y2="1"><stop offset="0" stop-color="#f4f4f4"/><stop offset="1" stop-color="#b8b8b8"/></linearGradient>
</defs><path d="M24.5 118.5l11 4-3.5 2 5.5 5.5-2 2-5.5-5.5-2 3.5z" fill="#f8f8f0" stroke="#6a6a6a" stroke-linejoin="round"/><rect x="60.5" y="117.5" width="8" height="7" rx="1" fill="#c81818" stroke="#801010"/><circle cx="73.5" cy="121" r="4" fill="#38b838" stroke="#1a7a1a"/><path d="M58.5 131.5l5.5-9.5 5.5 9.5z" fill="#f0d020" stroke="#a08a10" stroke-linejoin="round"/><path d="M66 122.5l8.5 3.5-2.5 1.5 4.5 4.5-1.5 1.5-4.5-4.5-1.5 2.5z" fill="#fafaf4" stroke="#5a5a5a" stroke-linejoin="round" stroke-width="0.9"/><path d="M98.5 117.5l14 14" stroke="#505050" stroke-width="2.2" stroke-linecap="round"/><rect x="134.5" y="117.5" width="15" height="13" rx="1" fill="url(#gg)" stroke="#404040"/><circle cx="178.5" cy="124.5" r="7" fill="url(#rg)" stroke="#505050"/><ellipse cx="215.5" cy="124.3" rx="7.2" ry="5" fill="url(#rg)" stroke="#505050"/><path d="M248.3 119.2A7.2 7.2 0 1 1 247.3 128.8L251.8 124.3Z" fill="url(#rg)" stroke="#505050" stroke-linejoin="round"/><path d="M282.5 131.5V122.5L287.5 117.5H294C292 119 290.5 121.5 292.5 123.5C293.5 124.5 296.5 124.5 296.5 127.5V130Q296.5 131.5 295 131.5Z" fill="url(#gv)" stroke="#505050" stroke-linejoin="round"/><path d="M322.5 119.5h4v9h5" fill="none" stroke="#111" stroke-width="1.3"/><rect x="317.5" y="116.5" width="5" height="5.5" fill="#e8e8e8" stroke="#8a8a8a"/><rect x="331.5" y="125.5" width="5" height="5.5" fill="#e8e8e8" stroke="#8a8a8a"/><path d="M360 119.5h4c2.5 0 2.5 3.5 0 3.5h-4c-2.5 0-2.5 4.5 0 5h8.5" fill="none" stroke="#111" stroke-width="1.3"/><rect x="354.5" y="116.5" width="5" height="5.5" fill="#e8e8e8" stroke="#8a8a8a"/><rect x="368.5" y="125.5" width="5" height="5.5" fill="#e8e8e8" stroke="#8a8a8a"/><g stroke="#6a6a6a" stroke-width="0.9"><rect x="396.5" y="116.5" width="9" height="2.5" fill="#d0d0d0"/><path d="M397.5 119h7v4.5l-3.5 3-3.5-3z" fill="url(#gv)"/><rect x="394.5" y="122.5" width="13" height="8" fill="url(#gv)"/><rect x="392.5" y="121.5" width="2" height="10" fill="#c8c8c8"/><rect x="407.5" y="121.5" width="2" height="10" fill="#c8c8c8"/></g><g stroke="#6a6a6a" stroke-width="0.9"><rect x="427.5" y="115.5" width="3" height="17" fill="#d8d8d8"/><rect x="445.5" y="115.5" width="3" height="17" fill="#d8d8d8"/><rect x="431.5" y="119.5" width="13" height="9" fill="url(#gv)"/><rect x="432.5" y="118.5" width="2" height="11" fill="#c0c0c0"/><rect x="441.5" y="118.5" width="2" height="11" fill="#c0c0c0"/></g><text x="474.5" y="131" text-anchor="middle" font-family="Liberation Serif" font-weight="bold" font-size="19" fill="#707070">A</text><path d="M507 118.5h-3v11h16v-11h-2" fill="none" stroke="#303030" stroke-width="1"/><text x="512" y="122.5" text-anchor="middle" font-family="Liberation Sans" font-weight="bold" font-size="7.5" fill="#202020">AB</text><rect x="541.5" y="119.5" width="15" height="9" rx="1.5" fill="url(#gg)" stroke="#505050"/><rect x="578.5" y="115.5" width="10" height="16" rx="1" fill="#f4f4f4" stroke="#505050"/><path d="M580 118.5h7M580 120.5h3M580 125.5h3M580 127.5h3" stroke="#555" stroke-width="1"/><rect x="584.5" y="121.5" width="10.5" height="10" rx="1" fill="#fafafa" stroke="#404040"/><rect x="579" y="122.5" width="16" height="2" fill="#2a70d8"/><path d="M586 126.5h6M586 128.5h6" stroke="#555" stroke-width="1"/><rect x="615.5" y="117.5" width="15" height="13" fill="#f4f4f4" stroke="#404040"/><text x="623" y="128.7" text-anchor="middle" font-family="Liberation Serif" font-weight="bold" font-size="12" fill="#505050">A</text><rect x="652.5" y="117.5" width="15" height="13" fill="#f4f4f4" stroke="#404040"/><text x="660" y="123.7" text-anchor="middle" font-family="Liberation Serif" font-weight="bold" font-size="6.5" fill="#404040">AB</text><text x="660" y="129.5" text-anchor="middle" font-family="Liberation Serif" font-weight="bold" font-size="6.5" fill="#404040">CD</text><rect x="689.5" y="117.5" width="15" height="13" fill="#f4f4f4" stroke="#404040"/><path d="M693.5 121.5l-2 2.5 2 2.5M700.5 121.5l2 2.5-2 2.5M695.5 120.5v6h3" fill="none" stroke="#222" stroke-width="1.1"/><circle cx="733.5" cy="124.5" r="6.3" fill="url(#rg)" stroke="#707070"/><circle cx="733.5" cy="124.5" r="3.3" fill="#333"/><rect x="764.5" y="117.5" width="13" height="13" fill="url(#gg)" stroke="#505050"/><path d="M767 120l8 8M775 120l-8 8" stroke="#555" stroke-width="2.4"/><rect x="800.5" y="117.5" width="15" height="13" fill="#f0f0f0" stroke="#404040"/><rect x="801" y="118" width="14" height="2.5" fill="#2060d0"/><g fill="#2890b0"><rect x="802" y="122" width="3" height="1.5"/><rect x="806.5" y="122" width="3" height="1.5"/><rect x="811" y="122" width="3" height="1.5"/><rect x="802" y="125" width="3" height="1.5"/><rect x="806.5" y="125" width="3" height="1.5"/><rect x="811" y="125" width="3" height="1.5"/><rect x="802" y="128" width="3" height="1.5"/><rect x="806.5" y="128" width="3" height="1.5"/><rect x="811" y="128" width="3" height="1.5"/></g><rect x="837.5" y="117.5" width="10" height="13" fill="#f8f8f8" stroke="#404040"/><rect x="847.5" y="117.5" width="6" height="13" fill="#c8c8c8" stroke="#404040"/><path d="M839 119.5h3M839 121.5h5M839 126.5h3M839 128.5h6" stroke="#606060" stroke-width="1"/><rect x="838" y="123" width="9" height="1.6" fill="#2a70d8"/><path d="M849 121.5l1.75-2 1.75 2zM849 126.5l1.75 2 1.75-2z" fill="#222"/><path d="M848 121.5h5M848 126.5h5" stroke="#505050" stroke-width="1"/><rect x="874.5" y="118.5" width="10" height="9" fill="#f4f4f4" stroke="#404040"/><rect x="884.5" y="118.5" width="6" height="9" fill="#c8c8c8" stroke="#404040"/><text x="879.5" y="126.3" text-anchor="middle" font-family="Liberation Sans" font-weight="bold" font-size="8.5" fill="#2a60d8">3</text><path d="M886 122l1.75-2 1.75 2zM886 124l1.75 2 1.75-2z" fill="#222"/><rect x="911.5" y="117.5" width="11" height="5" fill="#f8f8f8" stroke="#404040"/><rect x="922.5" y="117.5" width="5.5" height="5" fill="#c0c0c0" stroke="#404040"/><path d="M913 120.5h8" stroke="#404040" stroke-width="1"/><path d="M923.8 119.3h3l-1.5 2z" fill="#222"/><rect x="911.5" y="122.5" width="8" height="9" fill="#f8f8f8" stroke="#404040"/><path d="M913 124.5h4M913 129.5h5" stroke="#606060" stroke-width="1"/><rect x="912" y="126.2" width="7" height="1.6" fill="#2a70d8"/><path d="M948.5 130.5v-12.5h8l2 3h5.5v9.5z" fill="#dce4f4" stroke="#3a5aa8"/><path d="M956 118h5.5v3" fill="#3a6ad0" stroke="#3a5aa8"/><rect x="985.5" y="117.5" width="15" height="13" fill="#e8e8e8" stroke="#404040"/><rect x="986" y="118" width="14" height="2" fill="#2070e0"/><rect x="987.5" y="122.5" width="11" height="5" fill="#fff" stroke="#505050" stroke-width="0.8"/><rect x="1020.5" y="115.5" width="4" height="16" fill="#c8c8c8" stroke="#505050" stroke-width="0.9"/><rect x="1035.5" y="115.5" width="4" height="16" fill="#c8c8c8" stroke="#505050" stroke-width="0.9"/><path d="M1022 123.5h16" stroke="#111" stroke-width="2"/><path d="M1021.5 123.5l5-4v8zM1038.5 123.5l-5-4v8z" fill="#111"/><rect x="1059.5" y="117.5" width="8" height="7" fill="#c81818" stroke="#801010"/><circle cx="1072" cy="121" r="4" fill="#38b838" stroke="#1a7a1a"/><path d="M1064 130.5l5-8.5 5 8.5z" fill="#f0d020" stroke="#a08a10"/><rect x="1059.5" y="123.5" width="8" height="8" fill="#fff" stroke="#222"/><path d="M1063.5 125v5M1061 127.5h5" stroke="#111" stroke-width="1"/><circle cx="1103.5" cy="124.5" r="7.8" fill="#1a8aa0" stroke="#0e6070"/><path d="M1097.5 120.5l2 7.5 2.5-6 2.5 6 2-7.5" fill="none" stroke="#fff" stroke-width="2"/><ellipse cx="1140.5" cy="124.5" rx="8.6" ry="8" fill="#f4f4f4"/><path d="M1132.5 127A8.6 8 0 0 1 1143 116.6" fill="none" stroke="#505050" stroke-width="1.6"/><path d="M1148.5 122A8.6 8 0 0 1 1138 132.4" fill="none" stroke="#505050" stroke-width="1.6"/><path d="M1137.5 121.5l6 6M1143.5 121.5l-6 6" stroke="#901010" stroke-width="2.4"/><defs>
<linearGradient id="bg3" x1="0" y1="0" x2="1" y2="1"><stop offset="0" stop-color="#ffffff"/><stop offset="1" stop-color="#c8c8c8"/></linearGradient>
<linearGradient id="sl" x1="0" y1="0" x2="0" y2="1"><stop offset="0" stop-color="#c8d0e0"/><stop offset="0.5" stop-color="#8a96b0"/><stop offset="1" stop-color="#5a6478"/></linearGradient>
<linearGradient id="sh" x1="0" y1="0" x2="1" y2="0"><stop offset="0" stop-color="#5a6070"/><stop offset="0.5" stop-color="#dce0ea"/><stop offset="1" stop-color="#5a6070"/></linearGradient>
<radialGradient id="gl" cx="0.4" cy="0.35" r="0.7"><stop offset="0" stop-color="#a8e0ff"/><stop offset="1" stop-color="#1a70c8"/></radialGradient>
</defs><path d="M23.5 171h11.5" fill="none" stroke="#707070"/><rect x="24" y="158" width="14" height="12" fill="url(#bg3)"/><path d="M23.5 157v14.5h16" fill="none" stroke="#606060" stroke-width="1"/><path d="M21.5 158.5l2-2.5 2 2.5M38 169.5l2.5 2-2.5 2" fill="none" stroke="#606060" stroke-width="0.9"/><path d="M24 161l3 4 4-4 3 5 4-4" fill="none" stroke="#d02020" stroke-width="1.3"/><path d="M24 168l3-3 3 2 3-4 3 3 2-2" fill="none" stroke="#20a020" stroke-width="1.3"/><rect x="61" y="158" width="14" height="12" fill="url(#bg3)"/><path d="M60.5 157v14.5h16" fill="none" stroke="#606060"/><path d="M58.5 158.5l2-2.5 2 2.5M75 169.5l2.5 2-2.5 2" fill="none" stroke="#606060" stroke-width="0.9"/><rect x="62.5" y="162" width="2.5" height="8.5" fill="#c02020"/><rect x="66.5" y="158.5" width="2.5" height="12" fill="#20a020"/><rect x="70.5" y="164.5" width="2.5" height="6" fill="#f09020"/><circle cx="105" cy="164.3" r="7.2" fill="#f4f4f4" stroke="#c01818" stroke-width="1.9"/><path d="M105 159.5v5l2.5 2" fill="none" stroke="#701010" stroke-width="1.1"/><path d="M105 158.3v1M105 169.3v1M99 164.3h1M110 164.3h1" stroke="#444" stroke-width="0.9"/><rect x="139.5" y="154.5" width="4" height="18" rx="2" fill="#d8d8d8" stroke="#a0a0a0"/><rect x="134.5" y="161.5" width="14" height="5" rx="2" fill="url(#sl)" stroke="#5a6478" stroke-width="0.8"/><rect x="170.5" y="160.5" width="17" height="7.5" rx="1.8" fill="url(#sh)" stroke="#40485a" stroke-width="0.9"/><path d="M176 161v7M182 161v7" stroke="#8890a0" stroke-width="0.7"/><rect x="207" y="160.5" width="17.5" height="7.5" rx="1.5" fill="#e8e8e8" stroke="#404040" stroke-width="0.9"/><rect x="207.8" y="161.2" width="12" height="6.2" fill="#3a6ad8"/><path d="M210 161v6.5M213 161v6.5M216 161v6.5" stroke="#a8c4f4" stroke-width="0.8"/><rect x="220" y="161.2" width="4" height="6.2" fill="#f8f8f8"/><g fill="none" stroke-width="1.8"><path d="M247.5 157.5h6M247.5 163.8h6M247.5 170h6" stroke="#2a5ac8"/><path d="M246.5 158.5v4.5M254.5 158.5v4.5M246.5 165v4.5M254.5 165v4.5" stroke="#4a7ae0"/><path d="M259.5 157v6M259.5 165v6" stroke="#1a3a98"/></g><path d="M284 163.5h1.5M285.5 161.5v6M285.5 161.5h1.5M285.5 167.5h1.5M291 161.5h1.5M292.5 159.5v4M292.5 159.5h1.5M292.5 163.5h1.5M291 167.5h3" fill="none" stroke="#6a5a30" stroke-width="1"/><g fill="#f0f000" stroke="#6a6030" stroke-width="1"><rect x="280.5" y="162.5" width="3.5" height="2.5"/><rect x="287.5" y="160.5" width="3.5" height="2.5"/><rect x="287.5" y="166.5" width="3.5" height="2.5"/><rect x="294.5" y="158.5" width="3.5" height="2.5"/><rect x="294.5" y="162.5" width="3.5" height="2.5"/><rect x="294.5" y="166.5" width="3.5" height="2.5"/></g><path d="M321 163.5h1.5M322.5 161.5v6M322.5 161.5h1.5M322.5 167.5h1.5M328 161.5h1.5M329.5 159.5v4M329.5 159.5h1.5M329.5 163.5h1.5M328 167.5h3" fill="none" stroke="#303030" stroke-width="1"/><rect x="317.5" y="162.5" width="3.5" height="2.5" fill="#1a90f0" stroke="#001a80"/><rect x="324.5" y="160.5" width="3.5" height="2.5" fill="#1a90f0" stroke="#1a40a0"/><rect x="324.5" y="166.5" width="3.5" height="2.5" fill="#1a90f0" stroke="#1a40a0"/><rect x="331.5" y="158.5" width="3.5" height="2.5" fill="#f07030" stroke="#c04000"/><rect x="331.5" y="162.5" width="3.5" height="2.5" fill="#c060ff" stroke="#8000f0"/><rect x="331.5" y="166.5" width="3.5" height="2.5" fill="#e040c0" stroke="#a00090"/><path d="M356 158v12h4M356 164.5h0M356 161h4" fill="none" stroke="#404040" stroke-width="1.1"/><path d="M366.5 161h1.5M369.5 161h1.5M366.5 168h1.5M369.5 168h1.5" stroke="#404040" stroke-width="0.9"/><rect x="359.5" y="158.5" width="6" height="4.5" rx="1" fill="#f8c040" stroke="#d06010"/><rect x="359.5" y="166" width="6" height="4.5" rx="1" fill="#f8c040" stroke="#d06010"/><rect x="393.5" y="157" width="15" height="14" fill="none" stroke="#c01818" stroke-width="1.1"/><path d="M393 154.5v5M390.5 157h5" stroke="#111" stroke-width="1.1"/><path d="M396 169.5l-3.5 3" stroke="#c08a20" stroke-width="2.4" stroke-linecap="round"/><circle cx="400.5" cy="163" r="5" fill="url(#gl)" stroke="#406080" stroke-width="1"/><rect x="430.5" y="158.5" width="13" height="13" fill="#f4f4f4" stroke="#404040"/><path d="M432.5 161.5h6M432.5 164h5M432.5 166.5h4" stroke="#2a60d0" stroke-width="0.9"/><path d="M436 169.5l1-3.5 8-8.5 2.5 2.5-8.5 8z" fill="#f07830" stroke="#c04010" stroke-width="0.7"/><path d="M436 169.5l1-3.5 2.5 2.5z" fill="#f8e0b0"/><path d="M466.5 171.5h17.5l1-15" fill="none" stroke="#111" stroke-width="1.6"/><rect x="467.5" y="156.5" width="16" height="14" fill="#f0f0b0" stroke="#8a8a30"/><rect x="467" y="155" width="17" height="3" fill="#3a6ad8"/><g fill="#fff"><rect x="469" y="159" width="2" height="2"/><rect x="472" y="159" width="2" height="2"/><rect x="475" y="159" width="2" height="2"/><rect x="478" y="159" width="2" height="2"/><rect x="481" y="159" width="2" height="2"/><rect x="469" y="162" width="2" height="2"/><rect x="475" y="162" width="2" height="2"/><rect x="478" y="162" width="2" height="2"/><rect x="481" y="162" width="2" height="2"/><rect x="469" y="165" width="2" height="2"/><rect x="472" y="165" width="2" height="2"/><rect x="475" y="165" width="2" height="2"/><rect x="478" y="165" width="2" height="2"/><rect x="481" y="165" width="2" height="2"/></g><rect x="471.5" y="161.5" width="3" height="3" fill="none" stroke="#b02080" stroke-width="0.9"/><path d="M466.5 170.5h17" stroke="#8a8a30" stroke-width="1"/><g fill="none" stroke="#48a8e8"><circle cx="526" cy="164" r="9.5" stroke-width="0.7" stroke="#a0d4f4"/><circle cx="526" cy="164" r="7.5" stroke-width="0.8"/><circle cx="526" cy="164" r="5.5" stroke-width="1.2" stroke="#2a8ad8"/></g><rect x="522.5" y="162.3" width="7" height="3.6" rx="1.8" fill="#fff" stroke="#606060" stroke-width="0.9"/><path d="M553.5 155v13l18.5 5" fill="none" stroke="#505050" stroke-width="0.9"/><path d="M551.5 157l2-2.5 2 2.5" fill="none" stroke="#505050" stroke-width="0.9"/><rect x="556" y="160" width="4.5" height="5" rx="1.5" fill="#e0c020" stroke="#907010" stroke-width="0.7"/><rect x="560.5" y="158.5" width="4.5" height="8" rx="1.5" fill="#d02020" stroke="#801010" stroke-width="0.7"/><rect x="565.5" y="157" width="5" height="11" rx="1.8" fill="#38c038" stroke="#187018" stroke-width="0.7"/><path d="M600 164.2l-7.5-0.5a7.8 7.8 0 0 1 11-6.5z" fill="#28a028" stroke="#106010" stroke-width="0.7"/><path d="M601.5 164l3.5-6.5a7.8 7.8 0 0 1 0 13z" fill="#f08a20" stroke="#a05010" stroke-width="0.7"/><path d="M600 165.5l3.5 6a7.8 7.8 0 0 1-11-5.5z" fill="#2a5aa8" stroke="#183a78" stroke-width="0.7"/><rect x="629.5" y="156.5" width="15" height="15" rx="1.2" fill="#8a96a8" stroke="#1a5ac8"/><rect x="630" y="157" width="14" height="2.8" fill="#4a8ae8"/><rect x="630.40" y="160.20" width="2.2" height="2.2" fill="#ffffff"/><rect x="630.40" y="163.00" width="2.2" height="2.2" fill="#ffffff"/><rect x="630.40" y="165.80" width="2.2" height="2.2" fill="#cfeaff"/><rect x="630.40" y="168.60" width="2.2" height="2.2" fill="#cfeaff"/><rect x="633.15" y="160.20" width="2.2" height="2.2" fill="#ffffff"/><rect x="633.15" y="163.00" width="2.2" height="2.2" fill="#ffffff"/><rect x="633.15" y="165.80" width="2.2" height="2.2" fill="#cfeaff"/><rect x="633.15" y="168.60" width="2.2" height="2.2" fill="#cfeaff"/><rect x="635.90" y="160.20" width="2.2" height="2.2" fill="#ffffff"/><rect x="635.90" y="163.00" width="2.2" height="2.2" fill="#404040"/><rect x="635.90" y="165.80" width="2.2" height="2.2" fill="#cfeaff"/><rect x="635.90" y="168.60" width="2.2" height="2.2" fill="#cfeaff"/><rect x="638.65" y="160.20" width="2.2" height="2.2" fill="#ffffff"/><rect x="638.65" y="163.00" width="2.2" height="2.2" fill="#ffffff"/><rect x="638.65" y="165.80" width="2.2" height="2.2" fill="#cfeaff"/><rect x="638.65" y="168.60" width="2.2" height="2.2" fill="#cfeaff"/><rect x="641.40" y="160.20" width="2.2" height="2.2" fill="#ffffff"/><rect x="641.40" y="163.00" width="2.2" height="2.2" fill="#ffffff"/><rect x="641.40" y="165.80" width="2.2" height="2.2" fill="#cfeaff"/><rect x="641.40" y="168.60" width="2.2" height="2.2" fill="#cfeaff"/><defs><linearGradient id="gface" x1="0" y1="0" x2="0" y2="1"><stop offset="0" stop-color="#fafafa"/><stop offset="1" stop-color="#c4c8d4"/></linearGradient></defs><circle cx="674" cy="164.5" r="7.5" fill="url(#gface)" stroke="#383838" stroke-width="2"/><path d="M674 165.5l2.5-5.5" stroke="#d02020" stroke-width="1.3"/><path d="M669 164.5h1.5M677.5 164.5h1.5M674 159v1.2" stroke="#555" stroke-width="0.9"/><path d="M702 155.5l5.5 1.5 5.5-1.5 6.5 1.5v16l-6.5-1.5-5.5 1.5-5.5-1.5z" fill="#9ad070" stroke="#d8d8d8" stroke-width="0.6"/><path d="M707.5 157v16M713 155.5v16" stroke="#70b060" stroke-width="0.8"/><path d="M702 169l18-4" stroke="#f0d040" stroke-width="1.5"/><path d="M703 172l4-2 4 3z" fill="#3a78d8"/><path d="M716 165c-2-2-3-3-3-4.5a3 3 0 0 1 6 0c0 1.5-1 2.5-3 4.5z" fill="#e02020"/><defs><linearGradient id="rim" x1="0" y1="0" x2="0" y2="1"><stop offset="0" stop-color="#d8d8d8"/><stop offset="1" stop-color="#8a8a8a"/></linearGradient><linearGradient id="face" x1="0" y1="0" x2="1" y2="0"><stop offset="0" stop-color="#7ccff4"/><stop offset="0.6" stop-color="#b8dcea"/><stop offset="1" stop-color="#d0d0d0"/></linearGradient></defs><ellipse cx="748" cy="165" rx="9.8" ry="8" fill="url(#rim)" stroke="#9a9a9a" stroke-width="0.6"/><ellipse cx="748" cy="164.5" rx="7.6" ry="6" fill="url(#face)"/><path d="M743.5 160.5l9 8" stroke="#d02828" stroke-width="1.1"/><path d="M745 166l2-2" stroke="#fff" stroke-width="0.8"/><path d="M778.5 157.5c3 4 5 9 1.5 13.5M778.5 157.5c-1 3 4 7 13.5 8M791.5 164c-4 0-9 2-11 7" fill="none" stroke="#d01818" stroke-width="1.6"/><g fill="#fafafa" stroke="#8a8a8a" stroke-width="0.8"><path d="M811.5 157.5q2-1 3.5 0v14q-1.5 1-3.5 0z"/><path d="M815.5 157.5q1.5 1 3 1.5v11.5q-1.5 0.5-3 1.5z"/><path d="M829 157.5q1.5-1 3.5 0v14q-2 1-3.5 0z"/><path d="M826 159q1.5-0.5 3-1.5v14q-1.5-1-3-1.5z"/></g><rect x="818.5" y="158" width="8" height="13.5" rx="1" fill="#f2f2f2" stroke="#303030" stroke-width="1"/><path d="M820.5 160.5h3M820.5 162.5h1M820.5 165h4M820.5 167h4M820.5 169h4" stroke="#606060" stroke-width="0.8"/><rect x="851.5" y="156.5" width="15" height="15" rx="1" fill="#f4f8ff" stroke="#1a5ac8"/><rect x="852" y="157" width="14" height="2" fill="#2a6ad8"/><rect x="853" y="160" width="6" height="1.8" fill="#f0b020"/><rect x="855" y="162.8" width="8" height="1.8" fill="#2a6ad8"/><rect x="857" y="165.6" width="7" height="1.8" fill="#28b048"/><rect x="854" y="168.4" width="9" height="1.8" fill="#d02030"/><rect x="852" y="160" width="1.5" height="11" fill="#2a6ad8"/><rect x="888.5" y="158.5" width="15" height="10" rx="5" fill="#a0c860" stroke="#404040"/><circle cx="898.5" cy="163.5" r="4.3" fill="#e8e8e8" stroke="#707070"/><path d="M891.5 161v5" stroke="#404040" stroke-width="1"/><rect x="923.5" y="155.5" width="19" height="17" fill="#f4f4f4" stroke="#707070"/><rect x="924" y="156" width="18" height="2" fill="#2a80e0"/><circle cx="933" cy="165.5" r="5.2" fill="url(#gl)"/><path d="M929 163c2 1 3-1 5 0s2 2 3 1M930 168c1-1 3 0 4-1" stroke="#e0f0ff" stroke-width="0.8" fill="none"/><defs>
<linearGradient id="tg" x1="0" y1="0" x2="0" y2="1"><stop offset="0" stop-color="#101010"/><stop offset="0.55" stop-color="#606060"/><stop offset="1" stop-color="#202020"/></linearGradient>
<linearGradient id="dg" x1="0" y1="0" x2="0" y2="1"><stop offset="0" stop-color="#1a1a1a"/><stop offset="0.5" stop-color="#505050"/><stop offset="1" stop-color="#1a1a1a"/></linearGradient>
<linearGradient id="sh4" x1="0" y1="0" x2="1" y2="1"><stop offset="0" stop-color="#ffffff"/><stop offset="1" stop-color="#909090"/></linearGradient>
<radialGradient id="gl4" cx="0.4" cy="0.35" r="0.7"><stop offset="0" stop-color="#e8f8ff"/><stop offset="1" stop-color="#6aaee0"/></radialGradient>
</defs><rect x="22" y="209" width="18" height="4.3" fill="#000"/><path d="M27 207.5l1-4 9-9 3 3-9 9z" fill="#f07038" stroke="#d04818" stroke-width="0.8"/><path d="M27 207.5l1-4 3 3z" fill="#f8e4c0" stroke="#a08060" stroke-width="0.5"/><path d="M29 203.5l8-8" stroke="#ffb080" stroke-width="0.8"/><rect x="59" y="209" width="18" height="4.3" fill="#fff"/><path d="M61 202c0-3 3-5 6-5l-2 6z" fill="#c01818" stroke="#901010" stroke-width="0.6"/><path d="M64 200.5l6-4.5 6 6-5 6z" fill="#f0c020" stroke="#c87818" stroke-width="0.9"/><path d="M70 196l1.5-1.5 6 0.5" fill="none" stroke="#a06010" stroke-width="1.2"/><path d="M96 198.5h18" stroke="#111" stroke-width="1"/><path d="M96 201.5h18" stroke="#111" stroke-width="1" stroke-dasharray="2.2 1.4"/><path d="M96 205h18" stroke="#111" stroke-width="1.8"/><path d="M96 209h18" stroke="#111" stroke-width="2" stroke-dasharray="2 2"/><rect x="134.5" y="198.5" width="6" height="5.5" rx="1" fill="url(#sh4)" stroke="#404040" stroke-width="0.9"/><rect x="143.5" y="198.5" width="6.5" height="5.5" rx="1" fill="#303030" stroke="#222" stroke-width="0.9"/><rect x="134.5" y="206.5" width="15.5" height="5" rx="1" fill="#d8d8d8" stroke="#404040" stroke-width="0.9"/><path d="M136 211l3-4M139.5 211l3-4M143 211l3-4M146.5 211l3-4" stroke="#777" stroke-width="0.9"/><text x="178.5" y="211" text-anchor="middle" font-family="Liberation Serif" font-weight="bold" font-size="19" fill="url(#tg)">T</text><rect x="208.5" y="196.5" width="16" height="15" fill="#fff" stroke="#111" stroke-width="1.1"/><text x="216.5" y="209" text-anchor="middle" font-family="Liberation Serif" font-weight="bold" font-size="14" fill="url(#tg)">T</text><path d="M247 199.5h11" stroke="#202020" stroke-width="1"/><path d="M247 201.5h7" stroke="#202020" stroke-width="1"/><path d="M247 203.5h10" stroke="#202020" stroke-width="1"/><path d="M247 205.5h14" stroke="#202020" stroke-width="1"/><path d="M247 207.5h11" stroke="#202020" stroke-width="1"/><path d="M247 209.5h7" stroke="#202020" stroke-width="1"/><path d="M247 211.5h12" stroke="#202020" stroke-width="1"/><path d="M284.0 199.5h12" stroke="#202020" stroke-width="1"/><path d="M286.0 201.5h8" stroke="#202020" stroke-width="1"/><path d="M283.0 203.5h14" stroke="#202020" stroke-width="1"/><path d="M285.0 205.5h10" stroke="#202020" stroke-width="1"/><path d="M286.0 207.5h8" stroke="#202020" stroke-width="1"/><path d="M284.0 209.5h12" stroke="#202020" stroke-width="1"/><path d="M283.0 211.5h14" stroke="#202020" stroke-width="1"/><path d="M323.5 199.5h11" stroke="#202020" stroke-width="1"/><path d="M326.5 201.5h8" stroke="#202020" stroke-width="1"/><path d="M320.5 203.5h14" stroke="#202020" stroke-width="1"/><path d="M324.5 205.5h10" stroke="#202020" stroke-width="1"/><path d="M322.5 207.5h12" stroke="#202020" stroke-width="1"/><path d="M326.5 209.5h8" stroke="#202020" stroke-width="1"/><path d="M322.5 211.5h12" stroke="#202020" stroke-width="1"/><path d="M356 204l6-6.5 12 12.5h-10l-2.5-3h-3.5z" fill="url(#sh4)" stroke="#404040" stroke-width="0.9" stroke-linejoin="round"/><path d="M362 197.5l12 12.5" stroke="#e01818" stroke-width="1.1"/><rect x="397.5" y="193.5" width="36" height="21" fill="#e1e1e1" stroke="#adadad"/><text x="400.5" y="209" font-family="Liberation Sans" font-size="12.5" fill="#000">1</text><path d="M418 202l4.5 4.5 4.5-4.5" fill="none" stroke="#333" stroke-width="1"/><text x="452.5" y="211" text-anchor="middle" font-family="Liberation Serif" font-weight="bold" font-size="16" fill="url(#dg)" stroke="#303030" stroke-width="0.35">1</text><text x="489.5" y="211" text-anchor="middle" font-family="Liberation Serif" font-weight="bold" font-size="16" fill="url(#dg)" stroke="#303030" stroke-width="0.35">2</text><text x="526.5" y="211" text-anchor="middle" font-family="Liberation Serif" font-weight="bold" font-size="16" fill="url(#dg)" stroke="#303030" stroke-width="0.35">3</text><text x="563.5" y="211" text-anchor="middle" font-family="Liberation Serif" font-weight="bold" font-size="16" fill="url(#dg)" stroke="#303030" stroke-width="0.35">4</text><text x="600.5" y="211" text-anchor="middle" font-family="Liberation Serif" font-weight="bold" font-size="16" fill="url(#dg)" stroke="#303030" stroke-width="0.35">5</text><text x="637.5" y="211" text-anchor="middle" font-family="Liberation Serif" font-weight="bold" font-size="16" fill="url(#dg)" stroke="#303030" stroke-width="0.35">6</text><text x="674.5" y="211" text-anchor="middle" font-family="Liberation Serif" font-weight="bold" font-size="16" fill="url(#dg)" stroke="#303030" stroke-width="0.35">7</text><text x="711.5" y="211" text-anchor="middle" font-family="Liberation Serif" font-weight="bold" font-size="16" fill="url(#dg)" stroke="#303030" stroke-width="0.35">8</text><path d="M740.5 210.5l4.5-4.5" stroke="#b08018" stroke-width="3" stroke-linecap="round"/><circle cx="748.5" cy="200.5" r="5.6" fill="url(#gl4)" stroke="#6a7ab0"/><path d="M747.5 208.5h8.5M751.75 204.3v8.5" stroke="#d01010" stroke-width="1.9"/><path d="M777.5 210.5l4.5-4.5" stroke="#b08018" stroke-width="3" stroke-linecap="round"/><circle cx="785.5" cy="200.5" r="5.6" fill="url(#gl4)" stroke="#6a7ab0"/><path d="M785.5 210h5" stroke="#d01010" stroke-width="1.9"/><text x="822" y="209" text-anchor="middle" font-family="Liberation Serif" font-weight="bold" font-size="14.5" fill="url(#dg)" stroke="#303030" stroke-width="0.4">1:1</text><rect x="841.5" y="193.5" width="62" height="21" fill="#fff" stroke="#7a7a7a"/><text x="845.5" y="209" font-family="Liberation Sans" font-size="12.5" fill="#000">100%</text><path d="M888 202l4.5 4.5 4.5-4.5" fill="none" stroke="#333" stroke-width="1"/><rect x="916" y="199" width="1" height="1" fill="#111"/><rect x="916" y="202" width="1" height="1" fill="#111"/><rect x="916" y="205" width="1" height="1" fill="#111"/><rect x="916" y="208" width="1" height="1" fill="#111"/><rect x="916" y="211" width="1" height="1" fill="#111"/><rect x="919" y="199" width="1" height="1" fill="#111"/><rect x="919" y="202" width="1" height="1" fill="#111"/><rect x="919" y="205" width="1" height="1" fill="#111"/><rect x="919" y="208" width="1" height="1" fill="#111"/><rect x="919" y="211" width="1" height="1" fill="#111"/><rect x="922" y="199" width="1" height="1" fill="#111"/><rect x="922" y="202" width="1" height="1" fill="#111"/><rect x="922" y="205" width="1" height="1" fill="#111"/><rect x="922" y="208" width="1" height="1" fill="#111"/><rect x="922" y="211" width="1" height="1" fill="#111"/><rect x="925" y="199" width="1" height="1" fill="#111"/><rect x="925" y="202" width="1" height="1" fill="#111"/><rect x="925" y="205" width="1" height="1" fill="#111"/><rect x="925" y="208" width="1" height="1" fill="#111"/><rect x="925" y="211" width="1" height="1" fill="#111"/><rect x="928" y="199" width="1" height="1" fill="#111"/><rect x="928" y="202" width="1" height="1" fill="#111"/><rect x="928" y="205" width="1" height="1" fill="#111"/><rect x="928" y="208" width="1" height="1" fill="#111"/><rect x="928" y="211" width="1" height="1" fill="#111"/><rect x="953" y="199" width="1" height="1" fill="#111"/><rect x="953" y="202" width="1" height="1" fill="#111"/><rect x="953" y="205" width="1" height="1" fill="#111"/><rect x="953" y="208" width="1" height="1" fill="#111"/><rect x="953" y="211" width="1" height="1" fill="#111"/><rect x="956" y="199" width="1" height="1" fill="#111"/><rect x="956" y="202" width="1" height="1" fill="#111"/><rect x="956" y="205" width="1" height="1" fill="#111"/><rect x="956" y="208" width="1" height="1" fill="#111"/><rect x="956" y="211" width="1" height="1" fill="#111"/><rect x="959" y="199" width="1" height="1" fill="#111"/><rect x="959" y="205" width="1" height="1" fill="#111"/><rect x="959" y="208" width="1" height="1" fill="#111"/><rect x="959" y="211" width="1" height="1" fill="#111"/><rect x="962" y="208" width="1" height="1" fill="#111"/><rect x="962" y="211" width="1" height="1" fill="#111"/><rect x="965" y="199" width="1" height="1" fill="#111"/><rect x="965" y="205" width="1" height="1" fill="#111"/><rect x="965" y="208" width="1" height="1" fill="#111"/><rect x="965" y="211" width="1" height="1" fill="#111"/><path d="M959 202.5h7M962.5 199v7" stroke="#111" stroke-width="1"/><path d="M994.5 199v13M990 203.5h13.5" stroke="#111" stroke-width="1.1"/><circle cx="994.5" cy="203.5" r="1.6" fill="#f08020"/><path d="M1030.5 199v13M1034.5 199v13M1027 202.5h13.5M1027 206.5h13.5" stroke="#f08020" stroke-width="1.2"/><path d="M1066.5 200v10M1062 205h10" stroke="#b0b8c0" stroke-width="0.8"/><path d="M1062 198.5l3 1.5" stroke="#111" stroke-width="1.1"/><path d="M1065 200l10 6" stroke="#f08020" stroke-width="1.2"/><path d="M1075 207.5h5M1077.5 205v5" stroke="#111" stroke-width="1.3"/><rect x="1097.5" y="195.5" width="19.5" height="17" fill="none" stroke="#404040" stroke-width="1.1"/><path d="M1098 210h16.5v-14" fill="none" stroke="#b0b0b0" stroke-width="0.9"/></svg>
<div class="a" style="left:637px;top:224px;width:1px;height:380px;background:#f8f8f8"></div>
<div class="a" style="left:638px;top:224px;width:565px;height:380px;background:#a0a0a0"></div>
<div class="a" style="left:1px;top:225px;width:237px;height:23px;background:#dbdbdb;border:1px solid #bcbcbc"></div>
<div class="t" style="left:6px;top:229px">Project View</div>
<svg class="a" style="left:193px;top:231px" width="40" height="12" viewBox="0 0 40 12">
<path d="M2.5 5V1.2h8v5.8h-2" fill="none" stroke="#2a2a2a" stroke-width="1.6"/><rect x="1" y="4.8" width="7.5" height="6.5" fill="#e4e4e4" stroke="#3a3a3a" stroke-width="1.5"/><path d="M2 8h6" stroke="#c0c0c0" stroke-width="1"/>
<path d="M26.5 1.5l9 9M35.5 1.5l-9 9" stroke="#1a1a1a" stroke-width="2"/></svg>
<svg class="a" style="left:5px;top:257px" width="18" height="13" viewBox="0 0 18 13"><path d="M1 2.5q0-2 2-2h8l6 6-6 6h-8q-2 0-2-2z" fill="#d03030" stroke="#a01818" stroke-width="0.8"/><path d="M4.5 3.5l5 5M9.5 3.5l-5 5" stroke="#fff" stroke-width="1.6"/></svg>
<div class="a" style="left:28px;top:252px;width:210px;height:22px;background:#fff;border:1px solid #7a7a7a"></div>
<svg class="a" style="left:221px;top:260px" width="11" height="7" viewBox="0 0 11 7"><path d="M0.5 0.5l5 5 5-5" fill="none" stroke="#333" stroke-width="1"/></svg>
<div class="a" style="left:1px;top:278px;width:237px;height:326px;background:#fff;border:1px solid #828790"></div>
<div class="t" style="left:7px;top:286px">Name</div>
<svg class="a" style="left:99px;top:279px" width="11" height="7" viewBox="0 0 11 7"><path d="M0.5 6l5-5 5 5" fill="none" stroke="#555" stroke-width="1"/></svg>
<div class="a" style="left:205px;top:279px;width:1px;height:30px;background:#e5e5e5"></div>
<div class="a" style="left:229px;top:279px;width:1px;height:30px;background:#e5e5e5"></div>
<div class="a" style="left:212px;top:285px;width:18px;height:18px;background:#f4f4f4;border:1px solid #d0d0d0;border-radius:3px"></div>
<div class="a" style="left:214px;top:288px;width:15px;height:12px;background:linear-gradient(#e8e8e8,#d4d4d4);border:2px solid #7a8290;border-radius:2px"></div>
<div class="a" style="left:235px;top:285px;width:2px;height:18px;background:#c8c8c8"></div>
<div class="a" style="left:2px;top:583px;width:235px;height:20px;background:#f0f0f0"></div>
<div class="a" style="left:23px;top:583px;width:49px;height:20px;background:#cdcdcd"></div>
<svg class="a" style="left:8px;top:588px" width="8" height="10" viewBox="0 0 8 10"><path d="M6.5 1l-4.5 4 4.5 4" fill="none" stroke="#505050" stroke-width="1.8"/></svg>
<svg class="a" style="left:223px;top:588px" width="8" height="10" viewBox="0 0 8 10"><path d="M1.5 1l4.5 4-4.5 4" fill="none" stroke="#505050" stroke-width="1.8"/></svg>
<svg class="a" style="left:10px;top:314px" width="8" height="11" viewBox="0 0 8 11"><path d="M1.5 1l5 4.5-5 4.5" fill="none" stroke="#909090" stroke-width="1.4"/></svg>
<div class="t" style="left:52px;top:311px">3.18</div>
<div class="a" style="left:27px;top:329px;width:209px;height:20px;background:#f5f5f5"></div>
<svg class="a" style="left:7px;top:335px" width="12" height="8" viewBox="0 0 12 8"><path d="M1 1.5l5 5 5-5" fill="none" stroke="#404040" stroke-width="1.5"/></svg>
<div class="a" style="left:52px;top:332px;width:52px;height:16px;border-radius:4px;background:#c4c4c4"></div>
<svg class="a" style="left:36px;top:354px" width="8" height="11" viewBox="0 0 8 11"><path d="M1.5 1l5 4.5-5 4.5" fill="none" stroke="#909090" stroke-width="1.4"/></svg>
<div class="t" style="left:79px;top:351px">Scripts</div>
<div class="a" style="left:52px;top:369px;width:184px;height:20px;background:#f5f5f5"></div>
<svg class="a" style="left:36px;top:374px" width="8" height="11" viewBox="0 0 8 11"><path d="M1.5 1l5 4.5-5 4.5" fill="none" stroke="#909090" stroke-width="1.4"/></svg>
<div class="t" style="left:79px;top:371px">Libraries</div>
<div class="t" style="left:81px;top:391px">Message Catalogs</div>
<div class="a" style="left:52px;top:409px;width:184px;height:20px;background:#f5f5f5"></div>
<svg class="a" style="left:36px;top:414px" width="8" height="11" viewBox="0 0 8 11"><path d="M1.5 1l5 4.5-5 4.5" fill="none" stroke="#909090" stroke-width="1.4"/></svg>
<div class="t" style="left:77px;top:411px">Data</div>
<svg class="a" style="left:36px;top:434px" width="8" height="11" viewBox="0 0 8 11"><path d="M1.5 1l5 4.5-5 4.5" fill="none" stroke="#909090" stroke-width="1.4"/></svg>
<div class="t" style="left:77px;top:431px">Configuration</div>
<div class="a" style="left:52px;top:449px;width:184px;height:20px;background:#f5f5f5"></div>
<div class="t" style="left:77px;top:451px">Datapoint Lists</div>
<svg class="a" style="left:36px;top:474px" width="8" height="11" viewBox="0 0 8 11"><path d="M1.5 1l5 4.5-5 4.5" fill="none" stroke="#909090" stroke-width="1.4"/></svg>
<div class="t" style="left:79px;top:471px">Pictures</div>
<div class="a" style="left:52px;top:489px;width:184px;height:20px;background:#f5f5f5"></div>
<div class="t" style="left:81px;top:491px">Color Databases</div>
<svg class="a" style="left:36px;top:514px" width="8" height="11" viewBox="0 0 8 11"><path d="M1.5 1l5 4.5-5 4.5" fill="none" stroke="#909090" stroke-width="1.4"/></svg>
<div class="t" style="left:80px;top:511px">Panels</div>
<svg class="a" style="left:30px;top:311px" width="17" height="16" viewBox="0 0 17 16"><path d="M2.5 7L8.5 9L14.5 7V13.5L8.5 15.5L2.5 13.5Z" fill="#e4dc30" stroke="#2c3a10" stroke-width="0.9" stroke-linejoin="round"/>
<path d="M8.5 9V15.5" stroke="#4a5a10" stroke-width="0.7"/>
<path d="M5 8.2V14.3M12 8.2V14.3" stroke="#28a018" stroke-width="1.6"/>
<path d="M1.8 6.2L8.5 8.2L15.2 6.2L9 4.2Z" fill="#48b828" stroke="#1c5010" stroke-width="0.8" stroke-linejoin="round"/>
<path d="M8.5 5c-2-3.5-5.5-3-4.5-0.5M8.5 5c2-3.5 5.5-3 4.5-0.5" fill="none" stroke="#28a018" stroke-width="1.5"/></svg>
<svg class="a" style="left:30px;top:331px" width="17" height="16" viewBox="0 0 17 16"><path d="M2.5 7L8.5 9L14.5 7V13.5L8.5 15.5L2.5 13.5Z" fill="#e4dc30" stroke="#2c3a10" stroke-width="0.9" stroke-linejoin="round"/>
<path d="M8.5 9V15.5" stroke="#4a5a10" stroke-width="0.7"/>
<path d="M5 8.2V14.3M12 8.2V14.3" stroke="#28a018" stroke-width="1.6"/>
<path d="M1.8 6.2L8.5 8.2L15.2 6.2L9 4.2Z" fill="#48b828" stroke="#1c5010" stroke-width="0.8" stroke-linejoin="round"/>
<path d="M8.5 5c-2-3.5-5.5-3-4.5-0.5M8.5 5c2-3.5 5.5-3 4.5-0.5" fill="none" stroke="#28a018" stroke-width="1.5"/></svg>
<svg class="a" style="left:55px;top:350px" width="19" height="17" viewBox="0 0 19 17"><rect x="1.5" y="3.5" width="12" height="12" fill="#f8f8f8" stroke="#404040"/>
<path d="M3.5 6h6M3.5 8.5h5M3.5 11h4" stroke="#2a60d0" stroke-width="1"/>
<path d="M6 14.5l1-4 8.5-9 3 3-8.5 8.5z" fill="#f07838" stroke="#c04818" stroke-width="0.7"/><path d="M6 14.5l1-4 3 3z" fill="#f8e4c0" stroke="#806040" stroke-width="0.5"/></svg>
<svg class="a" style="left:55px;top:370px" width="19" height="17" viewBox="0 0 19 17"><rect x="1.5" y="3.5" width="12" height="12" fill="#f8f8f8" stroke="#404040"/>
<path d="M3.5 6h6M3.5 8.5h5M3.5 11h4" stroke="#2a60d0" stroke-width="1"/>
<path d="M6 14.5l1-4 8.5-9 3 3-8.5 8.5z" fill="#f07838" stroke="#c04818" stroke-width="0.7"/><path d="M6 14.5l1-4 3 3z" fill="#f8e4c0" stroke="#806040" stroke-width="0.5"/></svg>
<svg class="a" style="left:55px;top:391px" width="20" height="17" viewBox="0 0 20 17"><rect x="1" y="1" width="10" height="2.5" fill="#111"/><rect x="1" y="3.5" width="10" height="2.5" fill="#e01010"/><rect x="1" y="6" width="10" height="2.5" fill="#f0c000"/>
<rect x="7" y="6" width="12" height="9.5" fill="#1a48a8"/><path d="M7 10.75h12M13 6v9.5" stroke="#fff" stroke-width="2.2"/><path d="M7 10.75h12M13 6v9.5" stroke="#d01818" stroke-width="1.2"/></svg>
<svg class="a" style="left:55px;top:412px" width="17" height="16" viewBox="0 0 17 16"><defs><linearGradient id="fg412" x1="0" y1="0" x2="0" y2="1"><stop offset="0" stop-color="#fff2a0"/><stop offset="1" stop-color="#e8b820"/></linearGradient></defs>
<path d="M1.5 14.5v-11l1-1h4l1.5 1.5h6.5v10.5z" fill="url(#fg412)" stroke="#b88a18"/>
<path d="M1.5 6.5h13" stroke="#c89820" stroke-width="0.8"/></svg>
<svg class="a" style="left:55px;top:432px" width="17" height="16" viewBox="0 0 17 16"><defs><linearGradient id="fg432" x1="0" y1="0" x2="0" y2="1"><stop offset="0" stop-color="#fff2a0"/><stop offset="1" stop-color="#e8b820"/></linearGradient></defs>
<path d="M1.5 14.5v-11l1-1h4l1.5 1.5h6.5v10.5z" fill="url(#fg432)" stroke="#b88a18"/>
<path d="M1.5 6.5h13" stroke="#c89820" stroke-width="0.8"/></svg>
<svg class="a" style="left:55px;top:452px" width="17" height="16" viewBox="0 0 17 16"><defs><linearGradient id="fg452" x1="0" y1="0" x2="0" y2="1"><stop offset="0" stop-color="#fff2a0"/><stop offset="1" stop-color="#e8b820"/></linearGradient></defs>
<path d="M1.5 14.5v-11l1-1h4l1.5 1.5h6.5v10.5z" fill="url(#fg452)" stroke="#b88a18"/>
<path d="M1.5 6.5h13" stroke="#c89820" stroke-width="0.8"/></svg>
<svg class="a" style="left:54px;top:471px" width="19" height="17" viewBox="0 0 19 17"><rect x="3.5" y="0.5" width="14" height="11" fill="#e0e0d0" stroke="#8a7030"/>
<rect x="0.5" y="3.5" width="14" height="12" fill="#f0f0f0" stroke="#8a6010" stroke-width="1.3"/>
<rect x="2" y="5" width="11" height="9" fill="#8ac8f0"/><path d="M2 14l4-4 3 2 4-3v5z" fill="#40a030"/><path d="M4 9l2-1 2 1 2-2" stroke="#e04040" stroke-width="0.9" fill="none"/></svg>
<svg class="a" style="left:55px;top:490px" width="20" height="19" viewBox="0 0 20 19"><path d="M10 2c5 0 8 3 8 7s-3 7-7 7c-2 0-2-2-3.5-2s-2 1.5-4 1c-2-1-2-4-1-7 1-4 4-6 7.5-6z" fill="#f0d8b0" stroke="#a07040" stroke-width="0.9"/>
<circle cx="12" cy="5.5" r="1.8" fill="#2a60d0"/><circle cx="15" cy="9.5" r="1.8" fill="#d02020"/><circle cx="7" cy="7" r="1.6" fill="#30a030"/><circle cx="13" cy="13" r="1.6" fill="#d03030"/>
<path d="M1.5 1.5l7 11" stroke="#c01818" stroke-width="1.6"/><path d="M7.5 11l2 4" stroke="#303030" stroke-width="2"/></svg>
<svg class="a" style="left:54px;top:510px" width="20" height="20" viewBox="0 0 20 20"><defs><linearGradient id="gr2" x1="0" y1="1" x2="1" y2="0"><stop offset="0" stop-color="#e86a10"/><stop offset="1" stop-color="#ffd020"/></linearGradient></defs><path d="M15.81 7.51 L17.90 7.75 L17.90 10.25 L15.81 10.49 L15.16 12.05 L16.47 13.70 L14.70 15.47 L13.05 14.16 L11.49 14.81 L11.25 16.90 L8.75 16.90 L8.51 14.81 L6.95 14.16 L5.30 15.47 L3.53 13.70 L4.84 12.05 L4.19 10.49 L2.10 10.25 L2.10 7.75 L4.19 7.51 L4.84 5.95 L3.53 4.30 L5.30 2.53 L6.95 3.84 L8.51 3.19 L8.75 1.10 L11.25 1.10 L11.49 3.19 L13.05 3.84 L14.70 2.53 L16.47 4.30 L15.16 5.95Z M12.30 9.00 A2.3 2.3 0 1 0 7.70 9.00 A2.3 2.3 0 1 0 12.30 9.00Z" fill="url(#gr2)" fill-rule="evenodd" stroke="#a85010" stroke-width="0.8" stroke-linejoin="round"/><path d="M11.5 10l7.2 4.8-7.2 4.8z" fill="#38b838" stroke="#106a10" stroke-width="0.9" stroke-linejoin="round"/></svg>
<div class="a" style="left:243px;top:225px;width:390px;height:23px;background:#dbdbdb;border:1px solid #bcbcbc"></div>
<div class="t" style="left:248px;top:229px">Property Editor</div>
<svg class="a" style="left:588px;top:231px" width="40" height="12" viewBox="0 0 40 12">
<path d="M2.5 5V1.2h8v5.8h-2" fill="none" stroke="#2a2a2a" stroke-width="1.6"/><rect x="1" y="4.8" width="7.5" height="6.5" fill="#e4e4e4" stroke="#3a3a3a" stroke-width="1.5"/><path d="M2 8h6" stroke="#c0c0c0" stroke-width="1"/>
<path d="M26.5 1.5l9 9M35.5 1.5l-9 9" stroke="#1a1a1a" stroke-width="2"/></svg>
<div class="a" style="left:243px;top:274px;width:388px;height:329px;background:#fff;border:1px solid #d9d9d9"></div>
<div class="a" style="left:326px;top:252px;width:79px;height:23px;background:#f0f0f0;border:1px solid #d9d9d9;border-bottom:none"></div>
<div class="a" style="left:243px;top:250px;width:84px;height:25px;background:#fff;border:1px solid #d9d9d9;border-bottom:none"></div>
<div class="s" style="left:258px;top:255px"><u>S</u>tandard</div>
<div class="s" style="left:340px;top:256px;color:#6d6d6d"><u>E</u>xtended</div>
<div class="a" style="left:245px;top:275px;width:384px;height:160px;background:#fff;border:1px solid #828790"></div>
<div class="a" style="left:413px;top:276px;width:1px;height:30px;background:#e5e5e5"></div>
<div class="a" style="left:245px;top:436px;width:384px;height:4px;background:#f0f0f0"></div>
<div class="a" style="left:245px;top:441px;width:384px;height:159px;background:#fff;border:1px solid #828790"></div>
<div class="a" style="left:345px;top:442px;width:1px;height:30px;background:#e5e5e5"></div>
<div class="t" style="left:251px;top:283px">Property</div>
<div class="t" style="left:419px;top:283px">Value</div>
<div class="t" style="left:251px;top:449px">Event</div>
<div class="t" style="left:351px;top:449px">Script</div>
<div class="a" style="left:601px;top:607px;width:37px;height:22px;border:1px solid #fff;border-top-color:#a0a0a0;border-left-color:#a0a0a0;border-right-color:#d7d7d7"></div>
<div class="t" style="left:605px;top:610px">root</div>
<div class="a" style="left:644px;top:607px;width:98px;height:22px;border:1px solid #fff;border-top-color:#a0a0a0;border-left-color:#a0a0a0;border-right-color:#d7d7d7"></div>
<div class="t" style="left:648px;top:610px">0,0</div>
<div class="a" style="left:748px;top:607px;width:454px;height:22px;border:1px solid #fff;border-top-color:#a0a0a0;border-left-color:#a0a0a0;border-right-color:#d7d7d7"></div>
<div class="t" style="left:752px;top:610px">0x0</div>
</body></html>
